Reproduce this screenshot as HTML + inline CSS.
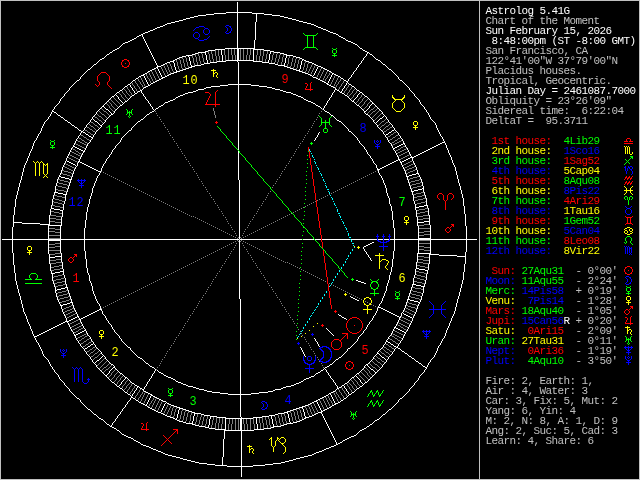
<!DOCTYPE html>
<html><head><meta charset="utf-8"><title>Astrolog 5.41G</title>
<style>
html,body{margin:0;padding:0;background:#000;}
body{width:640px;height:480px;position:relative;overflow:hidden;}
#t{position:absolute;left:0;top:0;width:640px;height:480px;will-change:transform;}
.l{position:absolute;left:485.4px;height:10px;line-height:10px;font-family:"Liberation Mono",monospace;font-size:11px;letter-spacing:-0.6011px;white-space:pre;}
.h{position:absolute;width:30px;height:16px;line-height:16px;text-align:center;font-family:"Liberation Mono",monospace;font-size:13.5px;letter-spacing:1px;text-indent:1px;white-space:pre;transform:scaleX(0.88);}
</style></head><body>
<svg width="640" height="480" viewBox="0 0 640 480" shape-rendering="crispEdges" style="position:absolute;left:0;top:0"><path fill="#0000ff" d="M226 25h3v1h-3zM199 26h5v1h-5zM225 26h1v1h-1zM229 26h2v1h-2zM196 27h3v1h-3zM204 27h1v1h-1zM226 27h1v1h-1zM195 28h1v1h-1zM205 28h3v1h-3zM194 29h1v1h-1zM204 29h1v1h-1zM208 29h1v1h-1zM193 30h1v1h-1zM226 31h1v1h-1zM195 32h3v1h-3zM225 32h1v1h-1zM229 32h2v1h-2zM194 33h1v1h-1zM198 33h1v1h-1zM204 33h1v1h-1zM208 33h1v1h-1zM226 33h3v1h-3zM205 34h3v1h-3zM209 36h1v1h-1zM194 37h1v1h-1zM198 37h1v1h-1zM208 37h1v1h-1zM195 38h3v1h-3zM207 38h1v1h-1zM198 39h1v1h-1zM204 39h3v1h-3zM199 40h5v1h-5zM377 140h1v1h-1zM376 141h1v1h-1zM378 141h1v1h-1zM377 142h1v1h-1zM375 143h1v1h-1zM379 143h1v1h-1zM376 144h1v1h-1zM378 144h1v1h-1zM375 146h5v1h-5zM630 166h2v1h-2zM624 167h1v1h-1zM628 167h2v1h-2zM630 169h2v1h-2zM631 174h1v1h-1zM77 180h9v1h-9zM79 182h1v1h-1zM83 182h1v1h-1zM80 183h1v1h-1zM82 183h1v1h-1zM79 185h2v1h-2zM82 185h2v1h-2zM625 206h1v1h-1zM631 206h1v1h-1zM626 207h1v1h-1zM630 207h1v1h-1zM627 208h3v1h-3zM626 209h1v1h-1zM630 209h1v1h-1zM626 213h1v1h-1zM630 213h1v1h-1zM627 214h3v1h-3zM376 236h1v1h-1zM378 236h1v1h-1zM382 236h1v1h-1zM384 236h1v1h-1zM388 236h1v1h-1zM390 236h1v1h-1zM378 240h1v1h-1zM388 240h1v1h-1zM378 241h3v1h-3zM386 241h3v1h-3zM380 242h3v1h-3zM384 242h3v1h-3zM379 246h4v1h-4zM384 246h4v1h-4zM624 246h1v1h-1zM626 246h1v1h-1zM628 246h1v1h-1zM630 248h1v1h-1zM630 253h1v1h-1zM629 254h1v1h-1zM631 254h1v1h-1zM626 276h3v1h-3zM625 277h1v1h-1zM629 277h2v1h-2zM626 278h1v1h-1zM626 282h1v1h-1zM625 283h1v1h-1zM629 283h2v1h-2zM626 284h3v1h-3zM429 301h1v1h-1zM445 301h1v1h-1zM430 302h1v1h-1zM444 302h1v1h-1zM431 303h1v1h-1zM443 303h1v1h-1zM432 304h1v1h-1zM442 304h1v1h-1zM429 309h17v1h-17zM432 314h1v1h-1zM442 314h1v1h-1zM431 315h1v1h-1zM443 315h1v1h-1zM430 316h1v1h-1zM444 316h1v1h-1zM429 317h1v1h-1zM445 317h1v1h-1zM422 331h9v1h-9zM424 333h1v1h-1zM428 333h1v1h-1zM311 334h3v1h-3zM425 334h1v1h-1zM427 334h1v1h-1zM424 336h2v1h-2zM427 336h2v1h-2zM297 343h3v1h-3zM322 346h5v1h-5zM320 347h3v1h-3zM326 347h3v1h-3zM624 347h9v1h-9zM319 348h1v1h-1zM328 348h2v1h-2zM63 349h1v1h-1zM321 349h1v1h-1zM329 349h1v1h-1zM626 349h1v1h-1zM630 349h1v1h-1zM62 350h1v1h-1zM64 350h1v1h-1zM321 350h2v1h-2zM627 350h1v1h-1zM629 350h1v1h-1zM63 351h1v1h-1zM322 351h1v1h-1zM61 352h1v1h-1zM65 352h1v1h-1zM626 352h2v1h-2zM629 352h2v1h-2zM62 353h1v1h-1zM64 353h1v1h-1zM61 355h5v1h-5zM308 356h3v1h-3zM628 356h1v1h-1zM322 357h1v1h-1zM627 357h1v1h-1zM629 357h1v1h-1zM321 358h2v1h-2zM628 358h1v1h-1zM321 359h1v1h-1zM329 359h1v1h-1zM626 359h1v1h-1zM630 359h1v1h-1zM308 360h3v1h-3zM319 360h1v1h-1zM328 360h2v1h-2zM627 360h1v1h-1zM629 360h1v1h-1zM320 361h3v1h-3zM326 361h3v1h-3zM305 362h1v1h-1zM313 362h1v1h-1zM322 362h5v1h-5zM626 362h5v1h-5zM305 363h3v1h-3zM311 363h3v1h-3zM307 364h2v1h-2zM310 364h2v1h-2zM72 367h1v1h-1zM76 367h1v1h-1zM80 367h1v1h-1zM73 368h1v1h-1zM75 368h1v1h-1zM77 368h1v1h-1zM79 368h1v1h-1zM81 368h1v1h-1zM305 368h9v1h-9zM87 379h1v1h-1zM89 379h1v1h-1zM83 382h1v1h-1zM87 382h1v1h-1zM84 383h3v1h-3zM262 401h3v1h-3zM261 402h1v1h-1zM265 402h2v1h-2zM262 403h1v1h-1zM262 407h1v1h-1zM261 408h1v1h-1zM265 408h2v1h-2zM262 409h3v1h-3zM60 349h1v3h-1zM63 353h1v2h-1zM63 356h1v2h-1zM66 349h1v3h-1zM74 369h1v13h-1zM78 179h1v1h-1zM78 181h1v1h-1zM78 369h1v13h-1zM81 179h1v1h-1zM81 181h1v7h-1zM82 369h1v13h-1zM84 179h1v1h-1zM84 181h1v1h-1zM88 378h1v4h-1zM193 34h1v3h-1zM199 34h1v3h-1zM203 30h1v3h-1zM209 30h1v3h-1zM227 28h1v3h-1zM230 27h1v1h-1zM230 31h1v1h-1zM231 28h1v3h-1zM263 404h1v3h-1zM266 403h1v1h-1zM266 407h1v1h-1zM267 404h1v3h-1zM298 342h1v1h-1zM298 344h1v1h-1zM303 356h1v5h-1zM304 360h1v3h-1zM307 357h1v3h-1zM309 364h1v4h-1zM309 369h1v4h-1zM311 357h1v3h-1zM312 333h1v1h-1zM312 335h1v1h-1zM314 360h1v3h-1zM315 356h1v5h-1zM320 348h1v2h-1zM320 359h1v2h-1zM323 351h1v7h-1zM330 349h1v3h-1zM330 357h1v3h-1zM331 351h1v7h-1zM374 140h1v3h-1zM377 144h1v2h-1zM377 147h1v2h-1zM377 234h1v7h-1zM380 140h1v3h-1zM383 234h1v17h-1zM389 234h1v7h-1zM423 330h1v1h-1zM423 332h1v1h-1zM426 330h1v1h-1zM426 332h1v7h-1zM429 330h1v1h-1zM429 332h1v1h-1zM433 305h1v4h-1zM433 310h1v4h-1zM441 305h1v4h-1zM441 310h1v4h-1zM625 166h1v5h-1zM625 210h1v3h-1zM625 247h1v7h-1zM625 346h1v1h-1zM625 348h1v1h-1zM625 356h1v3h-1zM626 171h1v3h-1zM627 168h1v3h-1zM627 247h1v7h-1zM627 279h1v3h-1zM628 166h1v1h-1zM628 346h1v1h-1zM628 348h1v7h-1zM628 360h1v2h-1zM628 363h1v2h-1zM629 168h1v1h-1zM629 247h1v6h-1zM630 278h1v1h-1zM630 282h1v1h-1zM631 170h1v1h-1zM631 210h1v3h-1zM631 247h1v6h-1zM631 279h1v3h-1zM631 346h1v1h-1zM631 348h1v1h-1zM631 356h1v3h-1zM632 167h1v2h-1zM632 171h1v3h-1z"/><path fill="#00ff00" d="M303 33h1v1h-1zM317 33h1v1h-1zM304 34h1v1h-1zM316 34h1v1h-1zM305 35h2v1h-2zM308 35h5v1h-5zM314 35h2v1h-2zM305 47h2v1h-2zM308 47h5v1h-5zM314 47h2v1h-2zM304 48h1v1h-1zM316 48h1v1h-1zM332 48h1v1h-1zM336 48h1v1h-1zM303 49h1v1h-1zM317 49h1v1h-1zM333 49h3v1h-3zM333 53h1v1h-1zM335 53h1v1h-1zM332 55h5v1h-5zM126 109h1v1h-1zM132 109h1v1h-1zM127 112h5v1h-5zM126 114h1v1h-1zM132 114h1v1h-1zM128 116h1v1h-1zM130 116h1v1h-1zM319 116h1v1h-1zM331 116h1v1h-1zM129 117h1v1h-1zM320 117h1v1h-1zM330 117h1v1h-1zM321 122h9v1h-9zM320 125h1v1h-1zM330 125h1v1h-1zM217 126h1v1h-1zM319 126h1v1h-1zM331 126h1v1h-1zM218 127h1v1h-1zM219 128h1v1h-1zM324 128h1v1h-1zM326 128h1v1h-1zM221 131h1v1h-1zM222 132h1v1h-1zM324 132h3v1h-3zM223 133h1v1h-1zM224 134h1v1h-1zM225 135h1v1h-1zM227 138h1v1h-1zM228 139h1v1h-1zM50 140h1v1h-1zM54 140h1v1h-1zM229 140h1v1h-1zM51 141h3v1h-3zM230 141h1v1h-1zM231 142h1v1h-1zM310 143h3v1h-3zM51 145h1v1h-1zM53 145h1v1h-1zM233 145h1v1h-1zM234 146h1v1h-1zM50 147h5v1h-5zM235 147h1v1h-1zM236 148h1v1h-1zM237 149h1v1h-1zM238 150h1v1h-1zM308 151h1v1h-1zM240 153h1v1h-1zM241 154h1v1h-1zM242 155h1v1h-1zM307 155h1v1h-1zM243 156h1v1h-1zM630 156h3v1h-3zM244 157h1v1h-1zM631 157h1v1h-1zM630 158h1v1h-1zM307 159h1v1h-1zM625 159h1v1h-1zM629 159h1v1h-1zM246 160h1v1h-1zM626 160h1v1h-1zM628 160h1v1h-1zM247 161h1v1h-1zM627 161h1v1h-1zM248 162h1v1h-1zM626 162h1v1h-1zM628 162h1v1h-1zM249 163h1v1h-1zM307 163h1v1h-1zM625 163h1v1h-1zM629 163h1v1h-1zM250 164h1v1h-1zM624 164h1v1h-1zM252 167h1v1h-1zM307 167h1v1h-1zM253 168h1v1h-1zM254 169h1v1h-1zM255 170h1v1h-1zM256 171h1v1h-1zM306 171h1v1h-1zM258 174h1v1h-1zM259 175h1v1h-1zM306 175h1v1h-1zM260 176h1v1h-1zM261 177h1v1h-1zM262 178h1v1h-1zM306 179h1v1h-1zM264 181h1v1h-1zM265 182h1v1h-1zM266 183h1v1h-1zM306 183h1v1h-1zM267 184h1v1h-1zM268 185h1v1h-1zM269 186h1v1h-1zM305 187h1v1h-1zM271 189h1v1h-1zM272 190h1v1h-1zM273 191h1v1h-1zM305 191h1v1h-1zM274 192h1v1h-1zM275 193h1v1h-1zM305 195h1v1h-1zM277 196h1v1h-1zM625 196h2v1h-2zM630 196h2v1h-2zM278 197h1v1h-1zM279 198h1v1h-1zM280 199h1v1h-1zM305 199h1v1h-1zM625 199h1v1h-1zM631 199h1v1h-1zM281 200h1v1h-1zM283 203h1v1h-1zM304 203h1v1h-1zM284 204h1v1h-1zM285 205h1v1h-1zM286 206h1v1h-1zM287 207h1v1h-1zM304 207h1v1h-1zM289 210h1v1h-1zM290 211h1v1h-1zM304 211h1v1h-1zM291 212h1v1h-1zM292 213h1v1h-1zM293 214h1v1h-1zM304 215h1v1h-1zM295 217h1v1h-1zM296 218h1v1h-1zM297 219h1v1h-1zM303 219h1v1h-1zM298 220h1v1h-1zM299 221h1v1h-1zM300 222h1v1h-1zM303 223h1v1h-1zM302 225h1v1h-1zM303 227h2v1h-2zM305 228h1v1h-1zM306 229h1v1h-1zM303 231h1v1h-1zM308 232h1v1h-1zM309 233h1v1h-1zM310 234h1v1h-1zM302 235h1v1h-1zM311 235h1v1h-1zM312 236h1v1h-1zM627 236h3v1h-3zM626 237h1v1h-1zM630 237h1v1h-1zM302 239h1v1h-1zM314 239h1v1h-1zM315 240h1v1h-1zM316 241h1v1h-1zM317 242h1v1h-1zM624 242h1v1h-1zM302 243h1v1h-1zM318 243h1v1h-1zM625 243h1v1h-1zM631 243h1v1h-1zM632 244h1v1h-1zM320 246h1v1h-1zM302 247h1v1h-1zM321 247h1v1h-1zM322 248h1v1h-1zM323 249h1v1h-1zM324 250h1v1h-1zM301 251h1v1h-1zM326 253h1v1h-1zM327 254h1v1h-1zM301 255h1v1h-1zM328 255h1v1h-1zM329 256h1v1h-1zM330 257h1v1h-1zM331 258h1v1h-1zM301 259h1v1h-1zM333 261h1v1h-1zM334 262h1v1h-1zM301 263h1v1h-1zM335 263h1v1h-1zM336 264h1v1h-1zM337 265h1v1h-1zM300 267h1v1h-1zM339 268h1v1h-1zM340 269h1v1h-1zM341 270h1v1h-1zM300 271h1v1h-1zM342 271h1v1h-1zM343 272h1v1h-1zM31 273h5v1h-5zM30 274h1v1h-1zM36 274h1v1h-1zM300 275h1v1h-1zM345 275h1v1h-1zM346 276h1v1h-1zM347 277h1v1h-1zM25 279h7v1h-7zM35 279h7v1h-7zM300 279h1v1h-1zM351 279h3v1h-3zM370 279h1v1h-1zM378 279h1v1h-1zM371 280h1v1h-1zM377 280h1v1h-1zM372 281h5v1h-5zM371 282h2v1h-2zM376 282h2v1h-2zM25 283h17v1h-17zM299 283h1v1h-1zM626 286h1v1h-1zM630 286h1v1h-1zM299 287h1v1h-1zM627 287h3v1h-3zM371 288h2v1h-2zM376 288h2v1h-2zM373 289h1v1h-1zM375 289h1v1h-1zM299 291h1v1h-1zM395 291h1v1h-1zM399 291h1v1h-1zM627 291h1v1h-1zM629 291h1v1h-1zM396 292h3v1h-3zM370 293h9v1h-9zM626 293h5v1h-5zM299 295h1v1h-1zM396 296h1v1h-1zM398 296h1v1h-1zM395 298h5v1h-5zM298 299h1v1h-1zM298 303h1v1h-1zM298 307h1v1h-1zM298 311h1v1h-1zM297 315h1v1h-1zM297 319h1v1h-1zM297 323h1v1h-1zM297 327h1v1h-1zM296 331h1v1h-1zM296 335h1v1h-1zM625 336h1v1h-1zM631 336h1v1h-1zM296 339h1v1h-1zM626 339h5v1h-5zM625 341h1v1h-1zM631 341h1v1h-1zM627 343h1v1h-1zM629 343h1v1h-1zM628 344h1v1h-1zM168 388h1v1h-1zM172 388h1v1h-1zM169 389h3v1h-3zM383 390h1v1h-1zM370 391h2v1h-2zM376 391h2v1h-2zM169 393h1v1h-1zM171 393h1v1h-1zM369 393h1v1h-1zM375 393h1v1h-1zM381 393h1v1h-1zM168 395h5v1h-5zM373 395h2v1h-2zM379 395h2v1h-2zM367 396h1v1h-1zM383 400h1v1h-1zM370 401h2v1h-2zM376 401h2v1h-2zM369 403h1v1h-1zM375 403h1v1h-1zM381 403h1v1h-1zM373 405h2v1h-2zM379 405h2v1h-2zM367 406h1v1h-1zM350 411h1v1h-1zM356 411h1v1h-1zM351 414h5v1h-5zM350 416h1v1h-1zM356 416h1v1h-1zM352 418h1v1h-1zM354 418h1v1h-1zM353 419h1v1h-1zM29 275h1v3h-1zM30 278h1v1h-1zM36 278h1v1h-1zM37 275h1v3h-1zM50 142h1v3h-1zM52 145h1v2h-1zM52 148h1v1h-1zM54 142h1v3h-1zM127 110h1v2h-1zM127 113h1v1h-1zM129 111h1v1h-1zM129 113h1v3h-1zM131 110h1v2h-1zM131 113h1v1h-1zM168 390h1v3h-1zM170 393h1v2h-1zM170 396h1v1h-1zM172 390h1v3h-1zM220 129h1v2h-1zM226 136h1v2h-1zM232 143h1v2h-1zM239 151h1v2h-1zM245 158h1v2h-1zM251 165h1v2h-1zM257 172h1v2h-1zM263 179h1v2h-1zM270 187h1v2h-1zM276 194h1v2h-1zM282 201h1v2h-1zM288 208h1v2h-1zM294 215h1v2h-1zM301 223h1v2h-1zM303 226h1v1h-1zM307 35h1v13h-1zM307 230h1v2h-1zM311 142h1v1h-1zM311 144h1v1h-1zM313 35h1v13h-1zM313 237h1v2h-1zM319 244h1v2h-1zM321 118h1v4h-1zM321 123h1v2h-1zM323 129h1v3h-1zM325 120h1v2h-1zM325 123h1v6h-1zM325 251h1v2h-1zM327 129h1v3h-1zM329 118h1v4h-1zM329 123h1v2h-1zM332 50h1v3h-1zM332 259h1v2h-1zM334 53h1v2h-1zM334 56h1v1h-1zM336 50h1v3h-1zM338 266h1v2h-1zM344 273h1v2h-1zM351 412h1v2h-1zM351 415h1v1h-1zM352 278h1v1h-1zM352 280h1v1h-1zM353 413h1v1h-1zM353 415h1v3h-1zM355 412h1v2h-1zM355 415h1v1h-1zM368 394h1v2h-1zM368 404h1v2h-1zM370 284h1v3h-1zM370 392h1v1h-1zM370 402h1v1h-1zM371 283h1v1h-1zM371 287h1v1h-1zM371 390h1v1h-1zM371 400h1v1h-1zM372 392h1v3h-1zM372 402h1v3h-1zM373 396h1v1h-1zM373 406h1v1h-1zM374 289h1v4h-1zM374 294h1v2h-1zM374 394h1v1h-1zM374 404h1v1h-1zM376 392h1v1h-1zM376 402h1v1h-1zM377 283h1v1h-1zM377 287h1v1h-1zM377 390h1v1h-1zM377 400h1v1h-1zM378 284h1v3h-1zM378 392h1v3h-1zM378 402h1v3h-1zM379 396h1v1h-1zM379 406h1v1h-1zM380 394h1v1h-1zM380 404h1v1h-1zM382 391h1v2h-1zM382 401h1v2h-1zM395 293h1v3h-1zM397 296h1v2h-1zM397 299h1v1h-1zM399 293h1v3h-1zM624 197h1v2h-1zM625 238h1v3h-1zM626 241h1v2h-1zM626 288h1v3h-1zM626 337h1v2h-1zM626 340h1v1h-1zM627 197h1v3h-1zM628 200h1v5h-1zM628 291h1v2h-1zM628 294h1v1h-1zM628 338h1v1h-1zM628 340h1v3h-1zM629 197h1v3h-1zM630 241h1v2h-1zM630 288h1v3h-1zM630 337h1v2h-1zM630 340h1v1h-1zM631 238h1v3h-1zM632 157h1v2h-1zM632 197h1v2h-1z"/><path fill="#00ffff" d="M310 151h1v1h-1zM311 153h1v1h-1zM313 157h1v1h-1zM314 159h1v1h-1zM314 161h1v1h-1zM316 165h1v1h-1zM317 167h1v1h-1zM319 171h1v1h-1zM320 173h1v1h-1zM322 177h1v1h-1zM324 181h1v1h-1zM325 183h1v1h-1zM325 185h1v1h-1zM327 189h2v1h-2zM328 191h1v1h-1zM330 195h1v1h-1zM331 197h1v1h-1zM333 201h1v1h-1zM335 205h1v1h-1zM336 207h1v1h-1zM338 213h2v1h-2zM339 215h1v1h-1zM341 219h1v1h-1zM342 221h1v1h-1zM344 225h1v1h-1zM345 227h1v1h-1zM347 231h1v1h-1zM349 237h2v1h-2zM350 239h1v1h-1zM352 243h2v1h-2zM353 245h1v1h-1zM354 247h1v1h-1zM347 258h1v1h-1zM346 259h1v1h-1zM332 282h1v1h-1zM331 283h1v1h-1zM330 285h1v1h-1zM329 286h1v1h-1zM317 306h1v1h-1zM316 307h1v1h-1zM315 309h1v1h-1zM314 310h1v1h-1zM313 312h1v1h-1zM312 313h1v1h-1zM311 315h1v1h-1zM310 316h1v1h-1zM302 330h1v1h-1zM301 331h1v1h-1zM300 333h1v1h-1zM299 334h1v1h-1zM298 336h1v1h-1zM297 337h1v1h-1zM303 327h1v2h-1zM305 324h1v2h-1zM307 321h1v2h-1zM309 149h1v2h-1zM309 318h1v2h-1zM312 155h1v2h-1zM315 162h1v2h-1zM318 168h1v2h-1zM318 303h1v2h-1zM320 300h1v2h-1zM321 174h1v2h-1zM322 297h1v2h-1zM323 179h1v2h-1zM324 294h1v2h-1zM326 186h1v2h-1zM326 291h1v2h-1zM329 192h1v2h-1zM332 198h1v2h-1zM333 279h1v2h-1zM334 203h1v2h-1zM335 276h1v2h-1zM337 209h1v3h-1zM337 273h1v2h-1zM339 270h1v2h-1zM340 216h1v2h-1zM341 267h1v2h-1zM343 222h1v2h-1zM343 264h1v2h-1zM345 261h1v2h-1zM346 228h1v2h-1zM348 233h1v3h-1zM348 255h1v2h-1zM350 252h1v2h-1zM351 240h1v2h-1zM352 249h1v2h-1z"/><path fill="#808080" d="M201 53h1v1h-1zM277 53h1v1h-1zM280 54h1v1h-1zM185 57h1v1h-1zM293 57h1v1h-1zM296 58h1v1h-1zM204 62h1v1h-1zM274 62h1v1h-1zM169 63h1v1h-1zM166 64h1v1h-1zM312 64h1v1h-1zM163 65h1v1h-1zM315 65h1v1h-1zM321 68h1v1h-1zM154 69h1v1h-1zM324 69h1v1h-1zM151 71h1v1h-1zM327 71h1v1h-1zM148 72h1v1h-1zM330 72h1v1h-1zM168 74h1v1h-1zM310 74h1v1h-1zM165 75h1v1h-1zM328 75h1v1h-1zM335 75h1v1h-1zM140 77h1v1h-1zM316 77h1v1h-1zM338 77h1v1h-1zM148 78h1v1h-1zM159 78h1v1h-1zM319 78h1v1h-1zM326 78h1v1h-1zM156 80h1v1h-1zM322 80h1v1h-1zM139 81h1v1h-1zM153 81h1v1h-1zM324 81h1v1h-1zM339 81h1v1h-1zM136 83h1v1h-1zM342 83h1v1h-1zM141 84h1v1h-1zM330 84h1v1h-1zM337 84h1v1h-1zM133 85h1v1h-1zM138 86h1v1h-1zM145 86h1v1h-1zM333 86h1v1h-1zM340 86h1v1h-1zM143 87h1v1h-1zM335 87h1v1h-1zM347 87h1v1h-1zM135 88h1v1h-1zM124 89h1v1h-1zM128 89h1v1h-1zM140 89h1v1h-1zM338 89h1v1h-1zM350 89h1v1h-1zM354 89h1v1h-1zM125 90h1v1h-1zM345 90h1v1h-1zM353 90h1v1h-1zM137 91h1v1h-1zM130 92h1v1h-1zM348 92h1v1h-1zM119 93h1v1h-1zM123 93h1v1h-1zM127 93h1v1h-1zM351 93h1v1h-1zM355 93h1v1h-1zM120 94h1v1h-1zM124 94h1v1h-1zM128 94h1v1h-1zM350 94h1v1h-1zM354 94h1v1h-1zM362 94h1v1h-1zM129 95h1v1h-1zM349 95h1v1h-1zM130 96h1v1h-1zM348 96h1v1h-1zM113 97h1v1h-1zM122 97h1v1h-1zM126 97h1v1h-1zM352 97h1v1h-1zM360 97h1v1h-1zM364 97h1v1h-1zM114 98h1v1h-1zM123 98h1v1h-1zM127 98h1v1h-1zM351 98h1v1h-1zM359 98h1v1h-1zM363 98h1v1h-1zM110 99h1v1h-1zM115 99h1v1h-1zM124 99h1v1h-1zM367 99h1v1h-1zM111 100h1v1h-1zM116 100h1v1h-1zM125 100h1v1h-1zM366 100h1v1h-1zM108 101h1v1h-1zM112 101h1v1h-1zM117 101h1v1h-1zM357 101h1v1h-1zM361 101h1v1h-1zM365 101h1v1h-1zM370 101h1v1h-1zM109 102h1v1h-1zM113 102h1v1h-1zM118 102h1v1h-1zM356 102h1v1h-1zM360 102h1v1h-1zM369 102h1v1h-1zM106 103h1v1h-1zM110 103h1v1h-1zM114 103h1v1h-1zM119 103h1v1h-1zM359 103h1v1h-1zM368 103h1v1h-1zM107 104h1v1h-1zM115 104h1v1h-1zM120 104h1v1h-1zM358 104h1v1h-1zM363 104h1v1h-1zM108 105h1v1h-1zM116 105h1v1h-1zM362 105h1v1h-1zM112 106h1v1h-1zM117 106h1v1h-1zM361 106h1v1h-1zM366 106h1v1h-1zM375 106h1v1h-1zM113 107h1v1h-1zM365 107h1v1h-1zM374 107h1v1h-1zM101 108h1v1h-1zM110 108h1v1h-1zM114 108h1v1h-1zM364 108h1v1h-1zM373 108h1v1h-1zM377 108h1v1h-1zM102 109h1v1h-1zM111 109h1v1h-1zM115 109h1v1h-1zM322 109h1v1h-1zM363 109h1v1h-1zM371 109h2v1h-2zM376 109h1v1h-1zM103 110h1v1h-1zM112 110h1v1h-1zM370 110h1v1h-1zM375 110h1v1h-1zM379 110h1v1h-1zM99 111h1v1h-1zM104 111h2v1h-2zM113 111h1v1h-1zM155 111h1v1h-1zM321 111h1v1h-1zM369 111h1v1h-1zM373 111h2v1h-2zM378 111h1v1h-1zM100 112h1v1h-1zM106 112h1v1h-1zM368 112h1v1h-1zM372 112h1v1h-1zM377 112h1v1h-1zM101 113h1v1h-1zM107 113h1v1h-1zM156 113h1v1h-1zM319 113h1v1h-1zM367 113h1v1h-1zM371 113h1v1h-1zM376 113h1v1h-1zM381 113h1v1h-1zM97 114h1v1h-1zM102 114h2v1h-2zM108 114h1v1h-1zM370 114h1v1h-1zM375 114h1v1h-1zM380 114h1v1h-1zM98 115h1v1h-1zM104 115h1v1h-1zM109 115h1v1h-1zM157 115h1v1h-1zM318 115h1v1h-1zM369 115h1v1h-1zM374 115h1v1h-1zM379 115h1v1h-1zM94 116h1v1h-1zM99 116h2v1h-2zM105 116h1v1h-1zM373 116h1v1h-1zM378 116h1v1h-1zM95 117h2v1h-2zM101 117h1v1h-1zM106 117h1v1h-1zM159 117h1v1h-1zM317 117h1v1h-1zM372 117h1v1h-1zM377 117h1v1h-1zM97 118h1v1h-1zM102 118h1v1h-1zM376 118h1v1h-1zM98 119h1v1h-1zM103 119h1v1h-1zM160 119h1v1h-1zM316 119h1v1h-1zM375 119h1v1h-1zM385 119h1v1h-1zM99 120h2v1h-2zM104 120h1v1h-1zM374 120h1v1h-1zM384 120h1v1h-1zM101 121h1v1h-1zM161 121h1v1h-1zM314 121h1v1h-1zM382 121h2v1h-2zM91 122h2v1h-2zM102 122h1v1h-1zM381 122h1v1h-1zM386 122h2v1h-2zM93 123h1v1h-1zM163 123h1v1h-1zM313 123h1v1h-1zM380 123h1v1h-1zM385 123h1v1h-1zM89 124h1v1h-1zM94 124h1v1h-1zM379 124h1v1h-1zM384 124h1v1h-1zM389 124h1v1h-1zM90 125h1v1h-1zM95 125h2v1h-2zM164 125h1v1h-1zM312 125h1v1h-1zM378 125h1v1h-1zM382 125h2v1h-2zM388 125h1v1h-1zM91 126h2v1h-2zM97 126h1v1h-1zM381 126h1v1h-1zM386 126h2v1h-2zM87 127h2v1h-2zM93 127h1v1h-1zM98 127h1v1h-1zM165 127h1v1h-1zM311 127h1v1h-1zM380 127h1v1h-1zM385 127h1v1h-1zM390 127h2v1h-2zM89 128h1v1h-1zM94 128h1v1h-1zM384 128h1v1h-1zM389 128h1v1h-1zM90 129h2v1h-2zM95 129h1v1h-1zM167 129h1v1h-1zM309 129h1v1h-1zM383 129h1v1h-1zM387 129h2v1h-2zM85 130h2v1h-2zM92 130h1v1h-1zM96 130h1v1h-1zM382 130h1v1h-1zM386 130h1v1h-1zM87 131h1v1h-1zM93 131h2v1h-2zM168 131h1v1h-1zM308 131h1v1h-1zM384 131h2v1h-2zM88 132h2v1h-2zM394 132h2v1h-2zM90 133h1v1h-1zM169 133h1v1h-1zM307 133h1v1h-1zM393 133h1v1h-1zM91 134h2v1h-2zM391 134h2v1h-2zM81 135h2v1h-2zM170 135h1v1h-1zM305 135h1v1h-1zM390 135h1v1h-1zM396 135h2v1h-2zM83 136h1v1h-1zM388 136h2v1h-2zM395 136h1v1h-1zM84 137h2v1h-2zM172 137h1v1h-1zM304 137h1v1h-1zM387 137h1v1h-1zM393 137h2v1h-2zM79 138h2v1h-2zM86 138h1v1h-1zM392 138h1v1h-1zM398 138h2v1h-2zM81 139h1v1h-1zM87 139h2v1h-2zM173 139h1v1h-1zM303 139h1v1h-1zM390 139h2v1h-2zM397 139h1v1h-1zM77 140h1v1h-1zM82 140h2v1h-2zM89 140h1v1h-1zM389 140h1v1h-1zM395 140h2v1h-2zM401 140h1v1h-1zM78 141h2v1h-2zM84 141h1v1h-1zM174 141h1v1h-1zM302 141h1v1h-1zM394 141h1v1h-1zM399 141h2v1h-2zM80 142h2v1h-2zM85 142h2v1h-2zM392 142h2v1h-2zM397 142h2v1h-2zM75 143h1v1h-1zM82 143h2v1h-2zM87 143h1v1h-1zM176 143h1v1h-1zM300 143h1v1h-1zM391 143h1v1h-1zM395 143h2v1h-2zM76 144h2v1h-2zM84 144h2v1h-2zM393 144h2v1h-2zM78 145h2v1h-2zM86 145h1v1h-1zM177 145h1v1h-1zM299 145h1v1h-1zM392 145h1v1h-1zM80 146h2v1h-2zM403 146h2v1h-2zM82 147h2v1h-2zM178 147h1v1h-1zM298 147h1v1h-1zM401 147h2v1h-2zM72 148h1v1h-1zM84 148h1v1h-1zM400 148h1v1h-1zM406 148h1v1h-1zM73 149h2v1h-2zM180 149h1v1h-1zM296 149h1v1h-1zM398 149h2v1h-2zM404 149h2v1h-2zM75 150h1v1h-1zM396 150h2v1h-2zM402 150h2v1h-2zM71 151h1v1h-1zM76 151h2v1h-2zM181 151h1v1h-1zM295 151h1v1h-1zM400 151h2v1h-2zM407 151h1v1h-1zM72 152h2v1h-2zM78 152h1v1h-1zM398 152h2v1h-2zM405 152h2v1h-2zM74 153h2v1h-2zM79 153h2v1h-2zM182 153h1v1h-1zM294 153h1v1h-1zM397 153h1v1h-1zM403 153h2v1h-2zM69 154h1v1h-1zM76 154h2v1h-2zM81 154h1v1h-1zM401 154h2v1h-2zM409 154h1v1h-1zM70 155h2v1h-2zM78 155h2v1h-2zM184 155h1v1h-1zM293 155h1v1h-1zM399 155h2v1h-2zM407 155h2v1h-2zM72 156h2v1h-2zM80 156h1v1h-1zM398 156h1v1h-1zM405 156h2v1h-2zM68 157h1v1h-1zM74 157h2v1h-2zM185 157h1v1h-1zM291 157h1v1h-1zM403 157h2v1h-2zM69 158h2v1h-2zM76 158h2v1h-2zM401 158h2v1h-2zM71 159h2v1h-2zM78 159h1v1h-1zM186 159h1v1h-1zM290 159h1v1h-1zM400 159h1v1h-1zM73 160h2v1h-2zM75 161h2v1h-2zM188 161h1v1h-1zM289 161h1v1h-1zM410 161h2v1h-2zM77 162h1v1h-1zM408 162h2v1h-2zM65 163h1v1h-1zM189 163h1v1h-1zM288 163h1v1h-1zM406 163h2v1h-2zM413 163h1v1h-1zM66 164h2v1h-2zM404 164h2v1h-2zM411 164h2v1h-2zM68 165h2v1h-2zM190 165h1v1h-1zM286 165h1v1h-1zM403 165h1v1h-1zM409 165h2v1h-2zM64 166h1v1h-1zM70 166h2v1h-2zM407 166h2v1h-2zM414 166h1v1h-1zM65 167h2v1h-2zM72 167h2v1h-2zM192 167h1v1h-1zM285 167h1v1h-1zM405 167h2v1h-2zM412 167h2v1h-2zM67 168h2v1h-2zM74 168h1v1h-1zM404 168h1v1h-1zM409 168h3v1h-3zM69 169h2v1h-2zM193 169h1v1h-1zM284 169h1v1h-1zM407 169h2v1h-2zM415 169h1v1h-1zM62 170h2v1h-2zM71 170h2v1h-2zM377 170h1v1h-1zM405 170h2v1h-2zM413 170h2v1h-2zM64 171h4v1h-4zM101 171h1v1h-1zM194 171h1v1h-1zM282 171h1v1h-1zM375 171h1v1h-1zM410 171h3v1h-3zM68 172h3v1h-3zM103 172h1v1h-1zM373 172h1v1h-1zM408 172h2v1h-2zM61 173h2v1h-2zM71 173h2v1h-2zM105 173h1v1h-1zM196 173h1v1h-1zM281 173h1v1h-1zM371 173h1v1h-1zM406 173h2v1h-2zM63 174h4v1h-4zM107 174h1v1h-1zM369 174h1v1h-1zM67 175h3v1h-3zM109 175h1v1h-1zM197 175h1v1h-1zM280 175h1v1h-1zM367 175h1v1h-1zM70 176h2v1h-2zM111 176h1v1h-1zM365 176h1v1h-1zM417 176h2v1h-2zM113 177h1v1h-1zM198 177h1v1h-1zM279 177h1v1h-1zM363 177h1v1h-1zM413 177h4v1h-4zM115 178h1v1h-1zM361 178h1v1h-1zM410 178h3v1h-3zM58 179h2v1h-2zM117 179h1v1h-1zM199 179h1v1h-1zM277 179h1v1h-1zM359 179h1v1h-1zM408 179h2v1h-2zM419 179h2v1h-2zM60 180h4v1h-4zM119 180h1v1h-1zM357 180h1v1h-1zM415 180h4v1h-4zM64 181h4v1h-4zM121 181h1v1h-1zM201 181h1v1h-1zM276 181h1v1h-1zM355 181h1v1h-1zM411 181h4v1h-4zM58 182h1v1h-1zM68 182h2v1h-2zM123 182h1v1h-1zM353 182h1v1h-1zM409 182h2v1h-2zM420 182h2v1h-2zM59 183h4v1h-4zM125 183h1v1h-1zM202 183h1v1h-1zM275 183h1v1h-1zM351 183h1v1h-1zM416 183h4v1h-4zM63 184h4v1h-4zM127 184h1v1h-1zM349 184h1v1h-1zM412 184h4v1h-4zM57 185h1v1h-1zM67 185h2v1h-2zM129 185h1v1h-1zM203 185h1v1h-1zM273 185h1v1h-1zM347 185h1v1h-1zM410 185h2v1h-2zM421 185h1v1h-1zM58 186h4v1h-4zM131 186h1v1h-1zM345 186h1v1h-1zM417 186h4v1h-4zM62 187h4v1h-4zM133 187h1v1h-1zM205 187h1v1h-1zM272 187h1v1h-1zM343 187h1v1h-1zM413 187h4v1h-4zM66 188h2v1h-2zM135 188h1v1h-1zM341 188h1v1h-1zM411 188h2v1h-2zM56 189h2v1h-2zM137 189h1v1h-1zM206 189h1v1h-1zM339 189h1v1h-1zM58 190h6v1h-6zM139 190h1v1h-1zM337 190h1v1h-1zM64 191h3v1h-3zM141 191h1v1h-1zM207 191h1v1h-1zM270 191h1v1h-1zM335 191h1v1h-1zM143 192h1v1h-1zM333 192h1v1h-1zM421 192h3v1h-3zM145 193h1v1h-1zM209 193h1v1h-1zM268 193h1v1h-1zM331 193h1v1h-1zM416 193h5v1h-5zM147 194h1v1h-1zM329 194h1v1h-1zM413 194h3v1h-3zM54 195h3v1h-3zM149 195h1v1h-1zM210 195h1v1h-1zM267 195h1v1h-1zM327 195h1v1h-1zM422 195h3v1h-3zM57 196h5v1h-5zM151 196h1v1h-1zM325 196h1v1h-1zM417 196h5v1h-5zM62 197h3v1h-3zM153 197h1v1h-1zM211 197h1v1h-1zM266 197h1v1h-1zM323 197h1v1h-1zM414 197h3v1h-3zM54 198h1v1h-1zM155 198h1v1h-1zM321 198h1v1h-1zM423 198h3v1h-3zM55 199h4v1h-4zM157 199h1v1h-1zM213 199h1v1h-1zM265 199h1v1h-1zM319 199h1v1h-1zM418 199h5v1h-5zM59 200h3v1h-3zM159 200h1v1h-1zM317 200h1v1h-1zM415 200h3v1h-3zM53 201h1v1h-1zM62 201h2v1h-2zM161 201h1v1h-1zM214 201h1v1h-1zM263 201h1v1h-1zM315 201h1v1h-1zM425 201h1v1h-1zM54 202h4v1h-4zM163 202h1v1h-1zM313 202h1v1h-1zM421 202h4v1h-4zM58 203h4v1h-4zM165 203h1v1h-1zM215 203h1v1h-1zM262 203h1v1h-1zM311 203h1v1h-1zM417 203h4v1h-4zM62 204h1v1h-1zM167 204h1v1h-1zM309 204h1v1h-1zM416 204h1v1h-1zM52 205h3v1h-3zM169 205h1v1h-1zM217 205h1v1h-1zM261 205h1v1h-1zM307 205h1v1h-1zM55 206h5v1h-5zM171 206h1v1h-1zM305 206h1v1h-1zM60 207h3v1h-3zM173 207h1v1h-1zM218 207h1v1h-1zM259 207h1v1h-1zM303 207h1v1h-1zM175 208h1v1h-1zM301 208h1v1h-1zM425 208h3v1h-3zM177 209h1v1h-1zM219 209h1v1h-1zM258 209h1v1h-1zM299 209h1v1h-1zM419 209h6v1h-6zM179 210h1v1h-1zM297 210h1v1h-1zM417 210h2v1h-2zM51 211h3v1h-3zM181 211h1v1h-1zM221 211h1v1h-1zM257 211h1v1h-1zM295 211h1v1h-1zM425 211h3v1h-3zM54 212h5v1h-5zM183 212h1v1h-1zM293 212h1v1h-1zM420 212h5v1h-5zM59 213h3v1h-3zM185 213h1v1h-1zM222 213h1v1h-1zM256 213h1v1h-1zM291 213h1v1h-1zM417 213h3v1h-3zM187 214h1v1h-1zM289 214h1v1h-1zM50 215h6v1h-6zM189 215h1v1h-1zM223 215h1v1h-1zM254 215h1v1h-1zM287 215h1v1h-1zM423 215h6v1h-6zM56 216h6v1h-6zM191 216h1v1h-1zM193 216h1v1h-1zM285 216h1v1h-1zM417 216h6v1h-6zM195 217h1v1h-1zM225 217h1v1h-1zM253 217h1v1h-1zM283 217h1v1h-1zM50 218h6v1h-6zM197 218h1v1h-1zM281 218h1v1h-1zM423 218h6v1h-6zM56 219h5v1h-5zM199 219h1v1h-1zM226 219h1v1h-1zM252 219h1v1h-1zM279 219h1v1h-1zM418 219h5v1h-5zM201 220h1v1h-1zM277 220h1v1h-1zM50 221h5v1h-5zM203 221h1v1h-1zM227 221h1v1h-1zM250 221h1v1h-1zM275 221h1v1h-1zM55 222h6v1h-6zM205 222h1v1h-1zM273 222h1v1h-1zM207 223h1v1h-1zM228 223h1v1h-1zM249 223h1v1h-1zM271 223h1v1h-1zM209 224h1v1h-1zM269 224h1v1h-1zM424 224h5v1h-5zM211 225h1v1h-1zM230 225h1v1h-1zM248 225h1v1h-1zM267 225h1v1h-1zM418 225h6v1h-6zM213 226h1v1h-1zM265 226h1v1h-1zM215 227h1v1h-1zM231 227h1v1h-1zM247 227h1v1h-1zM263 227h1v1h-1zM49 228h6v1h-6zM217 228h1v1h-1zM261 228h1v1h-1zM419 228h11v1h-11zM55 229h5v1h-5zM219 229h1v1h-1zM232 229h1v1h-1zM245 229h1v1h-1zM259 229h1v1h-1zM221 230h1v1h-1zM257 230h1v1h-1zM49 231h6v1h-6zM223 231h1v1h-1zM234 231h1v1h-1zM244 231h1v1h-1zM255 231h1v1h-1zM424 231h6v1h-6zM55 232h5v1h-5zM225 232h1v1h-1zM253 232h1v1h-1zM419 232h5v1h-5zM227 233h1v1h-1zM235 233h1v1h-1zM243 233h1v1h-1zM251 233h1v1h-1zM229 234h1v1h-1zM249 234h1v1h-1zM424 234h6v1h-6zM49 235h11v1h-11zM231 235h1v1h-1zM236 235h1v1h-1zM242 235h1v1h-1zM247 235h1v1h-1zM419 235h5v1h-5zM233 236h1v1h-1zM245 236h1v1h-1zM235 237h1v1h-1zM238 237h1v1h-1zM240 237h1v1h-1zM243 237h1v1h-1zM49 238h11v1h-11zM237 238h1v1h-1zM241 238h1v1h-1zM239 239h1v1h-1zM237 240h1v1h-1zM241 240h1v1h-1zM419 240h11v1h-11zM235 241h1v1h-1zM238 241h1v1h-1zM240 241h1v1h-1zM243 241h1v1h-1zM233 242h1v1h-1zM245 242h1v1h-1zM55 243h5v1h-5zM231 243h1v1h-1zM236 243h1v1h-1zM242 243h1v1h-1zM247 243h1v1h-1zM419 243h11v1h-11zM49 244h6v1h-6zM229 244h1v1h-1zM249 244h1v1h-1zM227 245h1v1h-1zM235 245h1v1h-1zM243 245h1v1h-1zM251 245h1v1h-1zM55 246h5v1h-5zM225 246h1v1h-1zM253 246h1v1h-1zM419 246h5v1h-5zM49 247h6v1h-6zM223 247h1v1h-1zM234 247h1v1h-1zM244 247h1v1h-1zM255 247h1v1h-1zM424 247h6v1h-6zM221 248h1v1h-1zM257 248h1v1h-1zM219 249h1v1h-1zM233 249h1v1h-1zM246 249h1v1h-1zM259 249h1v1h-1zM419 249h5v1h-5zM49 250h11v1h-11zM217 250h1v1h-1zM261 250h1v1h-1zM424 250h6v1h-6zM215 251h1v1h-1zM231 251h1v1h-1zM247 251h1v1h-1zM263 251h1v1h-1zM213 252h1v1h-1zM265 252h1v1h-1zM55 253h6v1h-6zM211 253h1v1h-1zM230 253h1v1h-1zM248 253h1v1h-1zM267 253h1v1h-1zM50 254h5v1h-5zM209 254h1v1h-1zM269 254h1v1h-1zM207 255h1v1h-1zM229 255h1v1h-1zM250 255h1v1h-1zM271 255h1v1h-1zM205 256h1v1h-1zM273 256h1v1h-1zM418 256h6v1h-6zM203 257h1v1h-1zM228 257h1v1h-1zM251 257h1v1h-1zM275 257h1v1h-1zM424 257h5v1h-5zM201 258h1v1h-1zM277 258h1v1h-1zM56 259h5v1h-5zM199 259h1v1h-1zM226 259h1v1h-1zM252 259h1v1h-1zM279 259h1v1h-1zM418 259h5v1h-5zM50 260h6v1h-6zM197 260h1v1h-1zM281 260h1v1h-1zM423 260h6v1h-6zM195 261h1v1h-1zM225 261h1v1h-1zM253 261h1v1h-1zM283 261h1v1h-1zM56 262h6v1h-6zM193 262h1v1h-1zM285 262h1v1h-1zM287 262h1v1h-1zM417 262h6v1h-6zM50 263h6v1h-6zM191 263h1v1h-1zM224 263h1v1h-1zM255 263h1v1h-1zM289 263h1v1h-1zM423 263h6v1h-6zM189 264h1v1h-1zM291 264h1v1h-1zM59 265h3v1h-3zM187 265h1v1h-1zM222 265h1v1h-1zM256 265h1v1h-1zM293 265h1v1h-1zM417 265h3v1h-3zM54 266h5v1h-5zM185 266h1v1h-1zM295 266h1v1h-1zM420 266h5v1h-5zM51 267h3v1h-3zM183 267h1v1h-1zM221 267h1v1h-1zM257 267h1v1h-1zM297 267h1v1h-1zM425 267h3v1h-3zM60 268h2v1h-2zM181 268h1v1h-1zM299 268h1v1h-1zM54 269h6v1h-6zM179 269h1v1h-1zM220 269h1v1h-1zM259 269h1v1h-1zM301 269h1v1h-1zM51 270h3v1h-3zM177 270h1v1h-1zM303 270h1v1h-1zM175 271h1v1h-1zM219 271h1v1h-1zM260 271h1v1h-1zM305 271h1v1h-1zM416 271h3v1h-3zM173 272h1v1h-1zM307 272h1v1h-1zM419 272h5v1h-5zM171 273h1v1h-1zM217 273h1v1h-1zM261 273h1v1h-1zM309 273h1v1h-1zM424 273h3v1h-3zM62 274h1v1h-1zM169 274h1v1h-1zM311 274h1v1h-1zM416 274h1v1h-1zM58 275h4v1h-4zM167 275h1v1h-1zM216 275h1v1h-1zM263 275h1v1h-1zM313 275h1v1h-1zM417 275h4v1h-4zM54 276h4v1h-4zM165 276h1v1h-1zM315 276h1v1h-1zM421 276h4v1h-4zM53 277h1v1h-1zM163 277h1v1h-1zM215 277h1v1h-1zM264 277h1v1h-1zM317 277h1v1h-1zM415 277h2v1h-2zM425 277h1v1h-1zM61 278h3v1h-3zM161 278h1v1h-1zM319 278h1v1h-1zM417 278h3v1h-3zM56 279h5v1h-5zM159 279h1v1h-1zM213 279h1v1h-1zM265 279h1v1h-1zM321 279h1v1h-1zM420 279h4v1h-4zM53 280h3v1h-3zM157 280h1v1h-1zM323 280h1v1h-1zM424 280h1v1h-1zM62 281h3v1h-3zM155 281h1v1h-1zM212 281h1v1h-1zM267 281h1v1h-1zM325 281h1v1h-1zM414 281h3v1h-3zM57 282h5v1h-5zM153 282h1v1h-1zM417 282h5v1h-5zM54 283h3v1h-3zM151 283h1v1h-1zM211 283h1v1h-1zM268 283h1v1h-1zM329 283h1v1h-1zM422 283h3v1h-3zM63 284h3v1h-3zM149 284h1v1h-1zM331 284h1v1h-1zM58 285h5v1h-5zM147 285h1v1h-1zM210 285h1v1h-1zM269 285h1v1h-1zM333 285h1v1h-1zM55 286h3v1h-3zM145 286h1v1h-1zM335 286h1v1h-1zM143 287h1v1h-1zM208 287h1v1h-1zM271 287h1v1h-1zM337 287h1v1h-1zM412 287h3v1h-3zM141 288h1v1h-1zM339 288h1v1h-1zM415 288h6v1h-6zM139 289h1v1h-1zM207 289h1v1h-1zM272 289h1v1h-1zM341 289h1v1h-1zM421 289h2v1h-2zM66 290h2v1h-2zM137 290h1v1h-1zM343 290h1v1h-1zM411 290h2v1h-2zM62 291h4v1h-4zM135 291h1v1h-1zM206 291h1v1h-1zM273 291h1v1h-1zM345 291h1v1h-1zM413 291h4v1h-4zM58 292h4v1h-4zM133 292h1v1h-1zM347 292h1v1h-1zM417 292h4v1h-4zM57 293h1v1h-1zM67 293h2v1h-2zM131 293h1v1h-1zM205 293h1v1h-1zM275 293h1v1h-1zM349 293h1v1h-1zM410 293h2v1h-2zM421 293h1v1h-1zM63 294h4v1h-4zM129 294h1v1h-1zM351 294h1v1h-1zM412 294h4v1h-4zM59 295h4v1h-4zM127 295h1v1h-1zM203 295h1v1h-1zM276 295h1v1h-1zM353 295h1v1h-1zM416 295h4v1h-4zM57 296h2v1h-2zM68 296h2v1h-2zM125 296h1v1h-1zM355 296h1v1h-1zM409 296h2v1h-2zM420 296h1v1h-1zM64 297h4v1h-4zM123 297h1v1h-1zM202 297h1v1h-1zM277 297h1v1h-1zM357 297h1v1h-1zM411 297h4v1h-4zM60 298h4v1h-4zM121 298h1v1h-1zM359 298h1v1h-1zM415 298h4v1h-4zM58 299h2v1h-2zM69 299h2v1h-2zM119 299h1v1h-1zM201 299h1v1h-1zM279 299h1v1h-1zM361 299h1v1h-1zM419 299h2v1h-2zM66 300h3v1h-3zM117 300h1v1h-1zM62 301h4v1h-4zM115 301h1v1h-1zM199 301h1v1h-1zM280 301h1v1h-1zM365 301h1v1h-1zM60 302h2v1h-2zM113 302h1v1h-1zM367 302h1v1h-1zM407 302h2v1h-2zM111 303h1v1h-1zM198 303h1v1h-1zM281 303h1v1h-1zM369 303h1v1h-1zM409 303h3v1h-3zM109 304h1v1h-1zM371 304h1v1h-1zM412 304h4v1h-4zM71 305h2v1h-2zM107 305h1v1h-1zM197 305h1v1h-1zM282 305h1v1h-1zM373 305h1v1h-1zM406 305h2v1h-2zM416 305h2v1h-2zM69 306h2v1h-2zM105 306h1v1h-1zM375 306h1v1h-1zM408 306h3v1h-3zM66 307h3v1h-3zM103 307h1v1h-1zM196 307h1v1h-1zM284 307h1v1h-1zM377 307h1v1h-1zM411 307h4v1h-4zM64 308h2v1h-2zM72 308h2v1h-2zM101 308h1v1h-1zM406 308h2v1h-2zM415 308h2v1h-2zM63 309h1v1h-1zM70 309h2v1h-2zM194 309h1v1h-1zM285 309h1v1h-1zM408 309h2v1h-2zM67 310h3v1h-3zM74 310h1v1h-1zM404 310h1v1h-1zM410 310h2v1h-2zM65 311h2v1h-2zM72 311h2v1h-2zM193 311h1v1h-1zM286 311h1v1h-1zM405 311h2v1h-2zM412 311h2v1h-2zM64 312h1v1h-1zM70 312h2v1h-2zM407 312h2v1h-2zM414 312h1v1h-1zM68 313h2v1h-2zM75 313h1v1h-1zM192 313h1v1h-1zM288 313h1v1h-1zM409 313h2v1h-2zM66 314h2v1h-2zM73 314h2v1h-2zM411 314h2v1h-2zM65 315h1v1h-1zM71 315h2v1h-2zM190 315h1v1h-1zM289 315h1v1h-1zM413 315h1v1h-1zM69 316h2v1h-2zM401 316h1v1h-1zM67 317h2v1h-2zM189 317h1v1h-1zM290 317h1v1h-1zM402 317h2v1h-2zM404 318h2v1h-2zM78 319h1v1h-1zM188 319h1v1h-1zM292 319h1v1h-1zM400 319h1v1h-1zM406 319h2v1h-2zM76 320h2v1h-2zM401 320h2v1h-2zM408 320h2v1h-2zM74 321h2v1h-2zM187 321h1v1h-1zM293 321h1v1h-1zM403 321h2v1h-2zM410 321h1v1h-1zM72 322h2v1h-2zM80 322h1v1h-1zM398 322h1v1h-1zM405 322h2v1h-2zM70 323h2v1h-2zM78 323h2v1h-2zM185 323h1v1h-1zM294 323h1v1h-1zM399 323h2v1h-2zM407 323h2v1h-2zM69 324h1v1h-1zM76 324h2v1h-2zM397 324h1v1h-1zM401 324h2v1h-2zM409 324h1v1h-1zM74 325h2v1h-2zM81 325h1v1h-1zM184 325h1v1h-1zM296 325h1v1h-1zM398 325h2v1h-2zM403 325h2v1h-2zM72 326h2v1h-2zM79 326h2v1h-2zM400 326h1v1h-1zM405 326h2v1h-2zM71 327h1v1h-1zM77 327h2v1h-2zM183 327h1v1h-1zM401 327h2v1h-2zM407 327h1v1h-1zM75 328h2v1h-2zM81 328h2v1h-2zM403 328h1v1h-1zM73 329h2v1h-2zM79 329h2v1h-2zM182 329h1v1h-1zM298 329h1v1h-1zM404 329h2v1h-2zM72 330h1v1h-1zM78 330h1v1h-1zM394 330h1v1h-1zM406 330h1v1h-1zM76 331h2v1h-2zM180 331h1v1h-1zM300 331h1v1h-1zM395 331h2v1h-2zM74 332h2v1h-2zM397 332h2v1h-2zM86 333h1v1h-1zM179 333h1v1h-1zM301 333h1v1h-1zM392 333h1v1h-1zM399 333h2v1h-2zM84 334h2v1h-2zM393 334h2v1h-2zM401 334h2v1h-2zM82 335h2v1h-2zM87 335h1v1h-1zM178 335h1v1h-1zM302 335h1v1h-1zM391 335h1v1h-1zM395 335h2v1h-2zM403 335h1v1h-1zM80 336h2v1h-2zM85 336h2v1h-2zM392 336h2v1h-2zM397 336h2v1h-2zM78 337h2v1h-2zM84 337h1v1h-1zM176 337h1v1h-1zM304 337h1v1h-1zM394 337h1v1h-1zM399 337h2v1h-2zM77 338h1v1h-1zM82 338h2v1h-2zM89 338h1v1h-1zM389 338h1v1h-1zM395 338h2v1h-2zM401 338h1v1h-1zM81 339h1v1h-1zM87 339h2v1h-2zM175 339h1v1h-1zM305 339h1v1h-1zM390 339h2v1h-2zM397 339h1v1h-1zM79 340h2v1h-2zM86 340h1v1h-1zM392 340h1v1h-1zM398 340h2v1h-2zM84 341h2v1h-2zM91 341h1v1h-1zM174 341h1v1h-1zM306 341h1v1h-1zM393 341h2v1h-2zM83 342h1v1h-1zM89 342h2v1h-2zM395 342h1v1h-1zM81 343h2v1h-2zM88 343h1v1h-1zM173 343h1v1h-1zM308 343h1v1h-1zM396 343h2v1h-2zM86 344h2v1h-2zM386 344h2v1h-2zM85 345h1v1h-1zM171 345h1v1h-1zM309 345h1v1h-1zM388 345h1v1h-1zM83 346h2v1h-2zM389 346h2v1h-2zM93 347h2v1h-2zM170 347h1v1h-1zM310 347h1v1h-1zM384 347h2v1h-2zM391 347h1v1h-1zM92 348h1v1h-1zM96 348h1v1h-1zM382 348h1v1h-1zM386 348h1v1h-1zM392 348h2v1h-2zM90 349h2v1h-2zM95 349h1v1h-1zM169 349h1v1h-1zM311 349h1v1h-1zM383 349h1v1h-1zM387 349h2v1h-2zM89 350h1v1h-1zM94 350h1v1h-1zM384 350h1v1h-1zM389 350h1v1h-1zM87 351h2v1h-2zM93 351h1v1h-1zM98 351h1v1h-1zM167 351h1v1h-1zM313 351h1v1h-1zM380 351h1v1h-1zM385 351h1v1h-1zM390 351h2v1h-2zM91 352h2v1h-2zM97 352h1v1h-1zM381 352h1v1h-1zM386 352h2v1h-2zM90 353h1v1h-1zM95 353h2v1h-2zM100 353h1v1h-1zM166 353h1v1h-1zM314 353h1v1h-1zM382 353h2v1h-2zM388 353h1v1h-1zM89 354h1v1h-1zM94 354h1v1h-1zM99 354h1v1h-1zM384 354h1v1h-1zM389 354h1v1h-1zM93 355h1v1h-1zM98 355h1v1h-1zM165 355h1v1h-1zM315 355h1v1h-1zM385 355h1v1h-1zM91 356h2v1h-2zM97 356h1v1h-1zM376 356h1v1h-1zM386 356h2v1h-2zM95 357h2v1h-2zM164 357h1v1h-1zM317 357h1v1h-1zM377 357h1v1h-1zM94 358h1v1h-1zM104 358h1v1h-1zM374 358h1v1h-1zM378 358h2v1h-2zM93 359h1v1h-1zM103 359h1v1h-1zM162 359h1v1h-1zM318 359h1v1h-1zM375 359h1v1h-1zM380 359h1v1h-1zM102 360h1v1h-1zM376 360h1v1h-1zM381 360h1v1h-1zM101 361h1v1h-1zM106 361h1v1h-1zM161 361h1v1h-1zM319 361h1v1h-1zM372 361h1v1h-1zM377 361h1v1h-1zM382 361h2v1h-2zM100 362h1v1h-1zM105 362h1v1h-1zM373 362h1v1h-1zM378 362h2v1h-2zM384 362h1v1h-1zM99 363h1v1h-1zM104 363h1v1h-1zM109 363h1v1h-1zM160 363h1v1h-1zM321 363h1v1h-1zM369 363h1v1h-1zM374 363h1v1h-1zM380 363h1v1h-1zM98 364h1v1h-1zM103 364h1v1h-1zM108 364h1v1h-1zM370 364h1v1h-1zM375 364h2v1h-2zM381 364h1v1h-1zM97 365h1v1h-1zM102 365h1v1h-1zM107 365h1v1h-1zM111 365h1v1h-1zM159 365h1v1h-1zM322 365h1v1h-1zM371 365h1v1h-1zM377 365h1v1h-1zM101 366h1v1h-1zM106 366h1v1h-1zM110 366h1v1h-1zM372 366h1v1h-1zM378 366h1v1h-1zM100 367h1v1h-1zM104 367h2v1h-2zM109 367h1v1h-1zM157 367h1v1h-1zM323 367h1v1h-1zM365 367h1v1h-1zM373 367h2v1h-2zM379 367h1v1h-1zM99 368h1v1h-1zM103 368h1v1h-1zM108 368h1v1h-1zM366 368h1v1h-1zM375 368h1v1h-1zM102 369h1v1h-1zM106 369h2v1h-2zM115 369h1v1h-1zM156 369h1v1h-1zM363 369h1v1h-1zM367 369h1v1h-1zM376 369h1v1h-1zM101 370h1v1h-1zM105 370h1v1h-1zM114 370h1v1h-1zM364 370h1v1h-1zM368 370h1v1h-1zM377 370h1v1h-1zM104 371h1v1h-1zM113 371h1v1h-1zM365 371h1v1h-1zM103 372h1v1h-1zM112 372h1v1h-1zM117 372h1v1h-1zM361 372h1v1h-1zM366 372h1v1h-1zM116 373h1v1h-1zM362 373h1v1h-1zM370 373h1v1h-1zM115 374h1v1h-1zM120 374h1v1h-1zM358 374h1v1h-1zM363 374h1v1h-1zM371 374h1v1h-1zM110 375h1v1h-1zM119 375h1v1h-1zM359 375h1v1h-1zM364 375h1v1h-1zM368 375h1v1h-1zM372 375h1v1h-1zM109 376h1v1h-1zM118 376h1v1h-1zM122 376h1v1h-1zM360 376h1v1h-1zM365 376h1v1h-1zM369 376h1v1h-1zM108 377h1v1h-1zM113 377h1v1h-1zM117 377h1v1h-1zM121 377h1v1h-1zM361 377h1v1h-1zM366 377h1v1h-1zM370 377h1v1h-1zM112 378h1v1h-1zM353 378h1v1h-1zM362 378h1v1h-1zM367 378h1v1h-1zM111 379h1v1h-1zM354 379h1v1h-1zM363 379h1v1h-1zM368 379h1v1h-1zM115 380h1v1h-1zM119 380h1v1h-1zM127 380h1v1h-1zM351 380h1v1h-1zM355 380h1v1h-1zM364 380h1v1h-1zM114 381h1v1h-1zM118 381h1v1h-1zM126 381h1v1h-1zM352 381h1v1h-1zM356 381h1v1h-1zM365 381h1v1h-1zM130 382h1v1h-1zM348 382h1v1h-1zM129 383h1v1h-1zM349 383h1v1h-1zM116 384h1v1h-1zM124 384h1v1h-1zM128 384h1v1h-1zM350 384h1v1h-1zM354 384h1v1h-1zM358 384h1v1h-1zM123 385h1v1h-1zM127 385h1v1h-1zM351 385h1v1h-1zM355 385h1v1h-1zM359 385h1v1h-1zM130 386h1v1h-1zM348 386h1v1h-1zM341 387h1v1h-1zM125 388h1v1h-1zM133 388h1v1h-1zM353 388h1v1h-1zM124 389h1v1h-1zM128 389h1v1h-1zM140 389h1v1h-1zM338 389h1v1h-1zM350 389h1v1h-1zM354 389h1v1h-1zM343 390h1v1h-1zM131 391h1v1h-1zM143 391h1v1h-1zM335 391h1v1h-1zM138 392h1v1h-1zM145 392h1v1h-1zM333 392h1v1h-1zM340 392h1v1h-1zM345 393h1v1h-1zM141 394h1v1h-1zM148 394h1v1h-1zM337 394h1v1h-1zM136 395h1v1h-1zM342 395h1v1h-1zM139 397h1v1h-1zM154 397h1v1h-1zM325 397h1v1h-1zM339 397h1v1h-1zM156 398h1v1h-1zM322 398h1v1h-1zM152 400h1v1h-1zM159 400h1v1h-1zM319 400h1v1h-1zM330 400h1v1h-1zM140 401h1v1h-1zM162 401h1v1h-1zM338 401h1v1h-1zM143 403h1v1h-1zM150 403h1v1h-1zM313 403h1v1h-1zM168 404h1v1h-1zM310 404h1v1h-1zM148 406h1v1h-1zM330 406h1v1h-1zM151 407h1v1h-1zM327 407h1v1h-1zM154 409h1v1h-1zM324 409h1v1h-1zM157 410h1v1h-1zM163 413h1v1h-1zM315 413h1v1h-1zM166 414h1v1h-1zM312 414h1v1h-1zM309 415h1v1h-1zM204 416h1v1h-1zM274 416h1v1h-1zM182 420h1v1h-1zM185 421h1v1h-1zM293 421h1v1h-1zM198 424h1v1h-1zM201 425h1v1h-1zM277 425h1v1h-1zM109 106h1v2h-1zM111 104h1v2h-1zM111 373h1v2h-1zM114 375h1v2h-1zM116 378h1v2h-1zM117 382h1v2h-1zM120 378h1v2h-1zM121 95h1v2h-1zM122 91h1v2h-1zM122 386h1v2h-1zM125 95h1v2h-1zM125 382h1v2h-1zM126 91h1v2h-1zM126 386h1v2h-1zM127 87h1v2h-1zM127 390h1v2h-1zM129 90h1v2h-1zM129 387h1v2h-1zM130 392h1v2h-1zM131 93h1v2h-1zM131 384h1v2h-1zM132 83h1v2h-1zM132 389h1v2h-1zM134 86h1v2h-1zM134 386h1v2h-1zM135 81h1v2h-1zM135 396h1v2h-1zM136 89h1v2h-1zM137 84h1v2h-1zM137 393h1v2h-1zM138 79h1v2h-1zM138 398h1v2h-1zM139 87h1v2h-1zM139 390h1v2h-1zM140 82h1v2h-1zM140 395h1v2h-1zM141 78h1v2h-1zM141 399h1v2h-1zM142 80h1v2h-1zM142 85h1v2h-1zM142 392h1v2h-1zM142 397h1v2h-1zM143 82h1v2h-1zM143 395h1v2h-1zM144 84h1v2h-1zM144 393h1v2h-1zM144 401h1v2h-1zM145 399h1v2h-1zM146 74h1v2h-1zM146 397h1v2h-1zM147 76h1v2h-1zM147 395h1v2h-1zM149 73h1v2h-1zM149 79h1v2h-1zM149 404h1v2h-1zM150 75h1v2h-1zM150 81h1v2h-1zM151 77h1v2h-1zM151 401h1v2h-1zM152 72h1v2h-1zM152 79h1v2h-1zM152 405h1v2h-1zM153 74h1v2h-1zM153 398h1v2h-1zM153 403h1v2h-1zM154 76h1v2h-1zM154 401h1v2h-1zM155 70h1v2h-1zM155 78h1v2h-1zM155 399h1v2h-1zM155 407h1v2h-1zM156 72h1v2h-1zM156 405h1v2h-1zM157 74h1v2h-1zM157 403h1v2h-1zM158 76h1v2h-1zM158 401h1v2h-1zM158 408h1v2h-1zM159 406h1v2h-1zM160 404h1v2h-1zM161 67h1v2h-1zM161 402h1v2h-1zM162 69h1v2h-1zM163 71h1v2h-1zM164 66h1v2h-1zM164 73h1v2h-1zM164 411h1v2h-1zM165 68h1v2h-1zM165 409h1v2h-1zM166 70h1v2h-1zM166 407h1v2h-1zM167 65h1v2h-1zM167 72h1v2h-1zM167 405h1v2h-1zM167 412h1v2h-1zM168 67h1v3h-1zM168 410h1v2h-1zM169 70h1v2h-1zM169 408h1v2h-1zM170 64h1v2h-1zM170 72h1v2h-1zM170 406h1v2h-1zM170 415h1v2h-1zM171 66h1v3h-1zM171 411h1v4h-1zM172 69h1v2h-1zM172 408h1v3h-1zM173 71h1v2h-1zM173 406h1v2h-1zM173 416h1v2h-1zM174 412h1v4h-1zM175 409h1v3h-1zM176 60h1v2h-1zM176 407h1v2h-1zM177 62h1v4h-1zM178 66h1v3h-1zM179 58h1v2h-1zM179 69h1v2h-1zM179 419h1v2h-1zM180 60h1v4h-1zM180 415h1v4h-1zM181 64h1v4h-1zM181 411h1v4h-1zM182 57h1v2h-1zM182 68h1v2h-1zM182 409h1v2h-1zM183 59h1v4h-1zM183 416h1v4h-1zM184 63h1v4h-1zM184 412h1v4h-1zM185 67h1v2h-1zM185 410h1v2h-1zM186 58h1v4h-1zM186 417h1v4h-1zM187 62h1v4h-1zM187 413h1v4h-1zM188 66h1v2h-1zM188 411h1v2h-1zM189 421h1v2h-1zM190 415h1v6h-1zM191 412h1v3h-1zM192 55h1v3h-1zM193 58h1v5h-1zM194 63h1v3h-1zM195 54h1v3h-1zM195 422h1v3h-1zM196 57h1v5h-1zM196 417h1v5h-1zM197 62h1v3h-1zM197 414h1v3h-1zM198 53h1v3h-1zM199 56h1v5h-1zM199 420h1v4h-1zM200 61h1v3h-1zM200 417h1v3h-1zM201 415h1v2h-1zM202 54h1v4h-1zM202 421h1v4h-1zM203 58h1v4h-1zM203 417h1v4h-1zM205 424h1v3h-1zM206 419h1v5h-1zM207 416h1v3h-1zM208 51h1v3h-1zM209 54h1v6h-1zM210 60h1v2h-1zM211 51h1v3h-1zM211 425h1v3h-1zM212 54h1v5h-1zM212 420h1v5h-1zM213 59h1v3h-1zM213 108h1v3h-1zM213 417h1v3h-1zM214 111h1v4h-1zM215 50h1v6h-1zM215 115h1v3h-1zM215 423h1v6h-1zM216 56h1v6h-1zM216 417h1v6h-1zM218 50h1v6h-1zM218 423h1v6h-1zM219 56h1v5h-1zM219 418h1v5h-1zM221 424h1v5h-1zM222 418h1v6h-1zM224 50h1v5h-1zM225 55h1v6h-1zM228 49h1v11h-1zM228 424h1v6h-1zM229 419h1v5h-1zM231 49h1v6h-1zM231 424h1v6h-1zM232 55h1v5h-1zM232 419h1v5h-1zM234 49h1v6h-1zM235 55h1v5h-1zM235 419h1v11h-1zM238 419h1v11h-1zM240 49h1v11h-1zM243 49h1v11h-1zM243 419h1v5h-1zM244 424h1v6h-1zM246 55h1v5h-1zM246 419h1v5h-1zM247 49h1v6h-1zM247 424h1v6h-1zM249 55h1v5h-1zM250 49h1v6h-1zM250 419h1v11h-1zM253 418h1v6h-1zM254 424h1v5h-1zM256 55h1v6h-1zM257 50h1v5h-1zM259 56h1v5h-1zM259 418h1v5h-1zM260 50h1v6h-1zM260 423h1v6h-1zM262 56h1v6h-1zM262 417h1v6h-1zM263 50h1v6h-1zM263 423h1v6h-1zM265 59h1v3h-1zM265 417h1v3h-1zM266 54h1v5h-1zM266 420h1v5h-1zM267 51h1v3h-1zM267 425h1v3h-1zM268 417h1v2h-1zM269 419h1v6h-1zM270 425h1v3h-1zM271 60h1v3h-1zM272 55h1v5h-1zM273 52h1v3h-1zM275 58h1v4h-1zM275 417h1v4h-1zM276 54h1v4h-1zM276 421h1v4h-1zM277 62h1v2h-1zM278 59h1v3h-1zM278 415h1v3h-1zM279 55h1v4h-1zM279 418h1v5h-1zM280 423h1v3h-1zM281 62h1v3h-1zM281 414h1v3h-1zM282 57h1v5h-1zM282 417h1v5h-1zM283 54h1v3h-1zM283 422h1v3h-1zM284 413h1v3h-1zM285 416h1v5h-1zM286 421h1v3h-1zM287 64h1v3h-1zM288 58h1v6h-1zM289 56h1v2h-1zM290 66h1v2h-1zM290 411h1v2h-1zM291 62h1v4h-1zM291 413h1v4h-1zM292 58h1v4h-1zM292 417h1v4h-1zM293 67h1v2h-1zM293 410h1v2h-1zM294 63h1v4h-1zM294 412h1v4h-1zM295 59h1v4h-1zM295 416h1v4h-1zM296 68h1v2h-1zM296 409h1v2h-1zM296 420h1v2h-1zM297 64h1v4h-1zM297 411h1v4h-1zM298 60h1v4h-1zM298 415h1v4h-1zM299 58h1v2h-1zM299 408h1v2h-1zM299 419h1v2h-1zM300 410h1v3h-1zM301 413h1v4h-1zM302 70h1v2h-1zM302 417h1v2h-1zM303 67h1v3h-1zM304 63h1v4h-1zM305 61h1v2h-1zM305 71h1v2h-1zM305 406h1v2h-1zM306 68h1v3h-1zM306 408h1v2h-1zM307 64h1v4h-1zM307 410h1v3h-1zM308 62h1v2h-1zM308 71h1v2h-1zM308 405h1v2h-1zM308 413h1v2h-1zM309 69h1v2h-1zM309 407h1v2h-1zM310 67h1v2h-1zM310 409h1v3h-1zM311 65h1v2h-1zM311 72h1v2h-1zM311 405h1v2h-1zM311 412h1v2h-1zM312 70h1v2h-1zM312 407h1v2h-1zM313 68h1v2h-1zM313 409h1v2h-1zM314 66h1v2h-1zM314 404h1v2h-1zM314 411h1v2h-1zM315 406h1v2h-1zM316 408h1v2h-1zM317 75h1v2h-1zM317 410h1v2h-1zM318 73h1v2h-1zM319 71h1v2h-1zM320 69h1v2h-1zM320 76h1v2h-1zM320 401h1v2h-1zM321 74h1v2h-1zM321 403h1v2h-1zM322 72h1v2h-1zM322 405h1v2h-1zM323 70h1v2h-1zM323 78h1v2h-1zM323 399h1v2h-1zM323 407h1v2h-1zM324 76h1v2h-1zM324 401h1v2h-1zM325 74h1v2h-1zM325 79h1v2h-1zM325 403h1v2h-1zM326 72h1v2h-1zM326 398h1v2h-1zM326 405h1v2h-1zM327 76h1v2h-1zM327 400h1v2h-1zM328 396h1v2h-1zM328 402h1v2h-1zM329 73h1v2h-1zM329 398h1v2h-1zM329 404h1v2h-1zM331 82h1v2h-1zM331 401h1v2h-1zM332 80h1v2h-1zM332 403h1v2h-1zM333 78h1v2h-1zM334 76h1v2h-1zM334 84h1v2h-1zM334 393h1v2h-1zM335 82h1v2h-1zM335 395h1v2h-1zM336 80h1v2h-1zM336 85h1v2h-1zM336 392h1v2h-1zM336 397h1v2h-1zM337 78h1v2h-1zM337 399h1v2h-1zM338 82h1v2h-1zM338 395h1v2h-1zM339 87h1v2h-1zM339 390h1v2h-1zM340 79h1v2h-1zM340 398h1v2h-1zM341 84h1v2h-1zM341 393h1v2h-1zM342 388h1v2h-1zM343 81h1v2h-1zM343 396h1v2h-1zM344 91h1v2h-1zM344 391h1v2h-1zM346 88h1v2h-1zM346 394h1v2h-1zM347 93h1v2h-1zM347 384h1v2h-1zM348 85h1v2h-1zM349 90h1v2h-1zM349 387h1v2h-1zM351 87h1v2h-1zM351 390h1v2h-1zM352 91h1v2h-1zM352 386h1v2h-1zM353 95h1v2h-1zM353 382h1v2h-1zM356 91h1v2h-1zM356 386h1v2h-1zM357 382h1v2h-1zM358 99h1v2h-1zM361 95h1v2h-1zM362 99h1v2h-1zM364 102h1v2h-1zM367 104h1v2h-1zM367 373h1v2h-1zM369 371h1v2h-1z"/><path fill="#c0c0c0" d="M0 0h640v1h-640zM0 479h640v1h-640zM0 1h1v478h-1zM479 1h1v478h-1zM639 1h1v478h-1z"/><path fill="#ff0000" d="M124 59h3v1h-3zM122 60h2v1h-2zM127 60h2v1h-2zM125 63h1v1h-1zM122 66h2v1h-2zM127 66h2v1h-2zM124 67h3v1h-3zM101 72h5v1h-5zM100 73h1v1h-1zM106 73h1v1h-1zM99 74h1v1h-1zM107 74h1v1h-1zM98 75h1v1h-1zM108 75h1v1h-1zM98 81h1v1h-1zM108 81h1v1h-1zM311 82h1v1h-1zM305 83h2v1h-2zM95 84h1v1h-1zM96 85h1v1h-1zM98 85h1v1h-1zM108 85h1v1h-1zM97 86h1v1h-1zM109 86h1v1h-1zM110 87h1v1h-1zM111 88h1v1h-1zM305 89h8v1h-8zM217 90h1v1h-1zM216 91h1v1h-1zM205 92h4v1h-4zM209 93h1v1h-1zM205 104h15v1h-15zM215 122h3v1h-3zM627 138h3v1h-3zM624 141h4v1h-4zM629 141h4v1h-4zM624 143h9v1h-9zM632 176h1v1h-1zM625 177h2v1h-2zM628 177h2v1h-2zM627 178h2v1h-2zM630 178h2v1h-2zM624 179h1v1h-1zM632 181h1v1h-1zM625 182h2v1h-2zM628 182h2v1h-2zM627 183h2v1h-2zM630 183h2v1h-2zM624 184h1v1h-1zM439 193h3v1h-3zM449 193h3v1h-3zM438 194h1v1h-1zM442 194h1v1h-1zM448 194h1v1h-1zM452 194h1v1h-1zM438 198h1v1h-1zM452 198h1v1h-1zM439 199h1v1h-1zM451 199h1v1h-1zM444 200h1v1h-1zM446 200h1v1h-1zM625 216h1v1h-1zM632 216h1v1h-1zM626 217h1v1h-1zM628 217h2v1h-2zM631 217h1v1h-1zM626 223h1v1h-1zM628 223h2v1h-2zM631 223h1v1h-1zM451 224h3v1h-3zM625 224h1v1h-1zM632 224h1v1h-1zM452 225h1v1h-1zM451 226h1v1h-1zM447 227h2v1h-2zM450 227h1v1h-1zM446 228h1v1h-1zM449 228h1v1h-1zM446 231h1v1h-1zM449 231h1v1h-1zM447 232h2v1h-2zM74 254h3v1h-3zM75 255h1v1h-1zM74 256h1v1h-1zM70 257h2v1h-2zM73 257h1v1h-1zM69 258h1v1h-1zM72 258h1v1h-1zM69 261h1v1h-1zM72 261h1v1h-1zM70 262h2v1h-2zM627 266h3v1h-3zM625 267h2v1h-2zM630 267h2v1h-2zM628 270h1v1h-1zM625 273h2v1h-2zM630 273h2v1h-2zM627 274h3v1h-3zM630 306h3v1h-3zM631 307h1v1h-1zM630 308h1v1h-1zM626 309h2v1h-2zM629 309h1v1h-1zM625 310h1v1h-1zM628 310h1v1h-1zM334 311h3v1h-3zM625 313h1v1h-1zM628 313h1v1h-1zM626 314h2v1h-2zM631 316h1v1h-1zM352 317h5v1h-5zM625 317h2v1h-2zM350 318h2v1h-2zM357 318h2v1h-2zM349 319h1v1h-1zM359 319h1v1h-1zM348 320h1v1h-1zM360 320h1v1h-1zM625 323h8v1h-8zM321 325h3v1h-3zM354 325h1v1h-1zM348 330h1v1h-1zM360 330h1v1h-1zM349 331h1v1h-1zM359 331h1v1h-1zM350 332h2v1h-2zM357 332h2v1h-2zM342 333h6v1h-6zM352 333h5v1h-5zM346 334h1v1h-1zM345 335h1v1h-1zM344 336h1v1h-1zM343 337h1v1h-1zM342 338h1v1h-1zM334 339h5v1h-5zM341 339h1v1h-1zM333 340h1v1h-1zM339 340h2v1h-2zM332 341h1v1h-1zM332 347h1v1h-1zM340 347h1v1h-1zM333 348h1v1h-1zM339 348h1v1h-1zM334 349h5v1h-5zM348 361h3v1h-3zM346 362h2v1h-2zM351 362h2v1h-2zM349 365h1v1h-1zM346 368h2v1h-2zM351 368h2v1h-2zM348 369h3v1h-3zM147 422h1v1h-1zM141 423h2v1h-2zM141 429h8v1h-8zM173 429h5v1h-5zM176 430h1v1h-1zM175 431h1v1h-1zM174 432h1v1h-1zM173 433h1v1h-1zM172 434h1v1h-1zM163 435h1v1h-1zM171 435h1v1h-1zM164 436h1v1h-1zM170 436h1v1h-1zM165 437h1v1h-1zM169 437h1v1h-1zM166 438h1v1h-1zM168 438h1v1h-1zM167 439h1v1h-1zM166 440h1v1h-1zM168 440h1v1h-1zM165 441h1v1h-1zM169 441h1v1h-1zM164 442h1v1h-1zM170 442h1v1h-1zM163 443h1v1h-1zM171 443h1v1h-1zM162 444h1v1h-1zM161 445h1v1h-1zM68 259h1v2h-1zM73 259h1v2h-1zM76 255h1v2h-1zM97 76h1v5h-1zM99 82h1v3h-1zM107 82h1v3h-1zM109 76h1v5h-1zM121 62h1v3h-1zM122 61h1v1h-1zM122 65h1v1h-1zM128 61h1v1h-1zM128 65h1v1h-1zM129 62h1v3h-1zM141 428h1v1h-1zM142 426h1v2h-1zM143 424h1v2h-1zM146 423h1v6h-1zM146 430h1v1h-1zM177 430h1v4h-1zM206 102h1v2h-1zM207 100h1v2h-1zM208 98h1v2h-1zM209 96h1v2h-1zM210 94h1v2h-1zM215 92h1v12h-1zM215 105h1v2h-1zM216 121h1v1h-1zM216 123h1v1h-1zM305 88h1v1h-1zM306 86h1v2h-1zM307 84h1v2h-1zM308 147h1v4h-1zM309 151h1v7h-1zM310 83h1v6h-1zM310 90h1v1h-1zM310 158h1v7h-1zM311 165h1v7h-1zM312 172h1v7h-1zM313 179h1v7h-1zM314 186h1v7h-1zM315 193h1v7h-1zM316 200h1v7h-1zM317 207h1v7h-1zM318 214h1v7h-1zM319 221h1v7h-1zM320 228h1v7h-1zM321 235h1v7h-1zM322 242h1v6h-1zM322 324h1v1h-1zM322 326h1v1h-1zM323 250h1v6h-1zM324 256h1v7h-1zM325 263h1v7h-1zM326 270h1v7h-1zM327 277h1v7h-1zM328 284h1v7h-1zM329 291h1v7h-1zM330 298h1v7h-1zM331 305h1v4h-1zM331 342h1v5h-1zM335 310h1v1h-1zM335 312h1v1h-1zM340 341h1v1h-1zM341 342h1v5h-1zM345 364h1v3h-1zM346 323h1v5h-1zM346 363h1v1h-1zM346 367h1v1h-1zM347 321h1v2h-1zM347 328h1v2h-1zM347 334h1v5h-1zM352 363h1v1h-1zM352 367h1v1h-1zM353 364h1v3h-1zM361 321h1v2h-1zM361 328h1v2h-1zM362 323h1v5h-1zM437 195h1v3h-1zM443 195h1v5h-1zM445 201h1v9h-1zM445 229h1v2h-1zM447 195h1v5h-1zM450 229h1v2h-1zM453 195h1v3h-1zM453 225h1v2h-1zM624 269h1v3h-1zM624 311h1v2h-1zM625 178h1v1h-1zM625 183h1v1h-1zM625 268h1v1h-1zM625 272h1v1h-1zM625 322h1v1h-1zM626 139h1v2h-1zM626 176h1v1h-1zM626 181h1v1h-1zM626 320h1v2h-1zM627 179h1v1h-1zM627 184h1v1h-1zM627 217h1v7h-1zM627 318h1v2h-1zM629 176h1v1h-1zM629 181h1v1h-1zM629 311h1v2h-1zM630 139h1v2h-1zM630 179h1v1h-1zM630 184h1v1h-1zM630 217h1v7h-1zM630 317h1v6h-1zM630 324h1v1h-1zM631 177h1v1h-1zM631 182h1v1h-1zM631 268h1v1h-1zM631 272h1v1h-1zM632 269h1v3h-1zM632 307h1v2h-1z"/><path fill="#ffff00" d="M211 70h2v1h-2zM214 70h2v1h-2zM215 72h2v1h-2zM214 73h1v1h-1zM217 77h1v1h-1zM393 97h1v1h-1zM403 97h1v1h-1zM393 98h2v1h-2zM402 98h2v1h-2zM394 99h9v1h-9zM394 101h1v1h-1zM402 101h1v1h-1zM393 102h1v1h-1zM403 102h1v1h-1zM393 108h1v1h-1zM403 108h1v1h-1zM394 109h1v1h-1zM402 109h1v1h-1zM395 110h1v1h-1zM401 110h1v1h-1zM396 111h5v1h-5zM414 121h3v1h-3zM414 125h1v1h-1zM416 125h1v1h-1zM413 127h5v1h-5zM624 146h1v1h-1zM626 146h1v1h-1zM628 146h1v1h-1zM630 154h2v1h-2zM33 161h1v1h-1zM37 161h1v1h-1zM41 161h1v1h-1zM34 162h1v1h-1zM36 162h1v1h-1zM38 162h1v1h-1zM40 162h1v1h-1zM42 162h1v1h-1zM44 164h1v1h-1zM46 164h1v1h-1zM45 165h1v1h-1zM44 174h1v1h-1zM46 174h1v1h-1zM45 175h1v1h-1zM44 176h1v1h-1zM46 176h1v1h-1zM43 177h1v1h-1zM47 177h1v1h-1zM624 186h1v1h-1zM632 186h1v1h-1zM625 187h1v1h-1zM631 187h1v1h-1zM624 190h9v1h-9zM625 193h1v1h-1zM631 193h1v1h-1zM624 194h1v1h-1zM632 194h1v1h-1zM405 216h3v1h-3zM405 220h1v1h-1zM407 220h1v1h-1zM404 222h5v1h-5zM627 227h3v1h-3zM625 228h2v1h-2zM630 228h2v1h-2zM624 229h1v1h-1zM625 230h2v1h-2zM630 231h2v1h-2zM632 232h1v1h-1zM625 233h2v1h-2zM630 233h2v1h-2zM627 234h3v1h-3zM28 246h3v1h-3zM354 246h1v1h-1zM357 247h3v1h-3zM28 250h1v1h-1zM30 250h1v1h-1zM27 252h5v1h-5zM375 255h4v1h-4zM380 255h4v1h-4zM382 259h4v1h-4zM381 260h1v1h-1zM386 260h2v1h-2zM380 261h1v1h-1zM386 265h1v1h-1zM386 268h1v1h-1zM387 269h1v1h-1zM344 294h3v1h-3zM627 296h3v1h-3zM366 297h3v1h-3zM364 298h2v1h-2zM369 298h2v1h-2zM627 300h1v1h-1zM629 300h1v1h-1zM626 302h5v1h-5zM364 304h2v1h-2zM369 304h2v1h-2zM366 305h1v1h-1zM368 305h1v1h-1zM363 309h9v1h-9zM317 323h1v1h-1zM313 326h1v1h-1zM625 327h2v1h-2zM628 327h2v1h-2zM629 329h2v1h-2zM100 330h3v1h-3zM309 330h1v1h-1zM628 330h1v1h-1zM305 333h1v1h-1zM100 334h1v1h-1zM102 334h1v1h-1zM631 334h1v1h-1zM99 336h5v1h-5zM301 336h1v1h-1zM297 338h1v1h-1zM281 437h3v1h-3zM270 438h1v1h-1zM278 438h1v1h-1zM280 438h1v1h-1zM284 438h1v1h-1zM269 439h1v1h-1zM279 439h1v1h-1zM276 440h1v1h-1zM278 440h1v1h-1zM279 441h1v1h-1zM280 442h1v1h-1zM284 442h1v1h-1zM281 443h3v1h-3zM283 445h1v1h-1zM247 446h2v1h-2zM250 446h2v1h-2zM272 446h1v1h-1zM274 446h1v1h-1zM284 446h1v1h-1zM251 448h2v1h-2zM250 449h1v1h-1zM284 452h1v1h-1zM253 453h1v1h-1zM283 453h1v1h-1zM27 247h1v3h-1zM29 250h1v2h-1zM29 253h1v2h-1zM31 247h1v3h-1zM35 163h1v13h-1zM39 163h1v13h-1zM43 163h1v11h-1zM47 163h1v11h-1zM99 331h1v3h-1zM101 334h1v2h-1zM101 337h1v2h-1zM103 331h1v3h-1zM213 69h1v8h-1zM216 75h1v2h-1zM217 73h1v2h-1zM249 445h1v8h-1zM252 451h1v2h-1zM253 449h1v2h-1zM271 437h1v9h-1zM273 447h1v5h-1zM275 441h1v5h-1zM277 437h1v3h-1zM282 444h1v1h-1zM285 439h1v3h-1zM285 447h1v5h-1zM345 293h1v1h-1zM345 295h1v1h-1zM358 246h1v1h-1zM358 248h1v1h-1zM363 300h1v3h-1zM364 299h1v1h-1zM364 303h1v1h-1zM367 305h1v4h-1zM367 310h1v4h-1zM370 299h1v1h-1zM370 303h1v1h-1zM371 300h1v3h-1zM379 253h1v16h-1zM385 266h1v2h-1zM387 263h1v2h-1zM388 261h1v2h-1zM392 95h1v3h-1zM392 103h1v5h-1zM395 100h1v1h-1zM401 100h1v1h-1zM404 95h1v3h-1zM404 103h1v5h-1zM404 217h1v3h-1zM406 220h1v2h-1zM406 223h1v2h-1zM408 217h1v3h-1zM413 122h1v3h-1zM415 125h1v2h-1zM415 128h1v2h-1zM417 122h1v3h-1zM624 231h1v2h-1zM625 147h1v7h-1zM626 188h1v2h-1zM626 191h1v2h-1zM626 297h1v3h-1zM627 147h1v7h-1zM627 231h1v2h-1zM627 326h1v8h-1zM628 300h1v2h-1zM628 303h1v2h-1zM629 147h1v7h-1zM629 229h1v2h-1zM630 188h1v2h-1zM630 191h1v2h-1zM630 297h1v3h-1zM630 332h1v2h-1zM631 330h1v2h-1zM632 152h1v2h-1zM632 229h1v2h-1z"/><path fill="#ffffff" d="M226 12h11v1h-11zM238 12h14v1h-14zM214 13h12v1h-12zM252 13h12v1h-12zM206 14h8v1h-8zM264 14h8v1h-8zM198 15h8v1h-8zM272 15h8v1h-8zM194 16h4v1h-4zM280 16h4v1h-4zM190 17h4v1h-4zM284 17h4v1h-4zM186 18h4v1h-4zM288 18h4v1h-4zM183 19h3v1h-3zM292 19h4v1h-4zM179 20h4v1h-4zM296 20h3v1h-3zM175 21h4v1h-4zM299 21h4v1h-4zM171 22h4v1h-4zM303 22h4v1h-4zM167 23h4v1h-4zM307 23h4v1h-4zM165 24h2v1h-2zM311 24h3v1h-3zM163 25h2v1h-2zM314 25h2v1h-2zM160 26h3v1h-3zM316 26h2v1h-2zM157 27h3v1h-3zM318 27h3v1h-3zM155 28h2v1h-2zM321 28h2v1h-2zM153 29h2v1h-2zM323 29h3v1h-3zM150 30h3v1h-3zM326 30h2v1h-2zM148 31h2v1h-2zM328 31h2v1h-2zM145 32h3v1h-3zM330 32h3v1h-3zM143 33h2v1h-2zM333 33h3v1h-3zM141 34h1v1h-1zM336 34h2v1h-2zM139 35h2v1h-2zM338 35h1v1h-1zM137 36h2v1h-2zM339 36h2v1h-2zM136 37h1v1h-1zM341 37h2v1h-2zM134 38h2v1h-2zM343 38h2v1h-2zM132 39h2v1h-2zM345 39h1v1h-1zM130 40h2v1h-2zM346 40h2v1h-2zM128 41h2v1h-2zM348 41h3v1h-3zM125 42h3v1h-3zM351 42h2v1h-2zM123 43h2v1h-2zM353 43h2v1h-2zM122 44h1v1h-1zM355 44h2v1h-2zM121 45h1v1h-1zM357 45h1v1h-1zM120 46h1v1h-1zM358 46h1v1h-1zM119 47h1v1h-1zM359 47h1v1h-1zM117 48h2v1h-2zM225 48h12v1h-12zM238 48h17v1h-17zM360 48h2v1h-2zM115 49h2v1h-2zM215 49h10v1h-10zM254 49h10v1h-10zM362 49h1v1h-1zM113 50h2v1h-2zM208 50h7v1h-7zM264 50h6v1h-6zM363 50h2v1h-2zM112 51h1v1h-1zM206 51h2v1h-2zM270 51h4v1h-4zM365 51h2v1h-2zM110 52h2v1h-2zM198 52h8v1h-8zM274 52h6v1h-6zM367 52h2v1h-2zM109 53h1v1h-1zM195 53h3v1h-3zM280 53h4v1h-4zM369 53h1v1h-1zM107 54h2v1h-2zM192 54h3v1h-3zM284 54h2v1h-2zM370 54h2v1h-2zM106 55h1v1h-1zM186 55h6v1h-6zM286 55h7v1h-7zM372 55h1v1h-1zM105 56h1v1h-1zM182 56h4v1h-4zM293 56h3v1h-3zM365 56h1v1h-1zM373 56h1v1h-1zM104 57h1v1h-1zM179 57h3v1h-3zM296 57h4v1h-4zM364 57h1v1h-1zM374 57h1v1h-1zM102 58h2v1h-2zM177 58h2v1h-2zM300 58h2v1h-2zM375 58h1v1h-1zM100 59h2v1h-2zM175 59h2v1h-2zM302 59h2v1h-2zM376 59h2v1h-2zM99 60h1v1h-1zM174 60h1v1h-1zM226 60h11v1h-11zM238 60h16v1h-16zM304 60h2v1h-2zM362 60h1v1h-1zM378 60h2v1h-2zM98 61h1v1h-1zM170 61h4v1h-4zM217 61h9v1h-9zM254 61h8v1h-8zM306 61h3v1h-3zM380 61h1v1h-1zM97 62h1v1h-1zM167 62h3v1h-3zM210 62h7v1h-7zM262 62h7v1h-7zM309 62h3v1h-3zM381 62h1v1h-1zM96 63h1v1h-1zM165 63h2v1h-2zM204 63h6v1h-6zM269 63h6v1h-6zM312 63h2v1h-2zM360 63h1v1h-1zM382 63h1v1h-1zM94 64h2v1h-2zM163 64h2v1h-2zM201 64h3v1h-3zM275 64h3v1h-3zM314 64h2v1h-2zM359 64h1v1h-1zM383 64h2v1h-2zM93 65h1v1h-1zM161 65h2v1h-2zM195 65h6v1h-6zM278 65h7v1h-7zM316 65h2v1h-2zM385 65h1v1h-1zM92 66h1v1h-1zM157 66h4v1h-4zM191 66h4v1h-4zM285 66h2v1h-2zM318 66h3v1h-3zM386 66h1v1h-1zM91 67h1v1h-1zM156 67h1v1h-1zM189 67h3v1h-3zM287 67h3v1h-3zM321 67h2v1h-2zM357 67h1v1h-1zM387 67h1v1h-1zM90 68h1v1h-1zM154 68h2v1h-2zM186 68h3v1h-3zM290 68h3v1h-3zM323 68h2v1h-2zM388 68h1v1h-1zM88 69h2v1h-2zM152 69h2v1h-2zM183 69h3v1h-3zM293 69h3v1h-3zM325 69h2v1h-2zM389 69h2v1h-2zM87 70h1v1h-1zM150 70h2v1h-2zM180 70h3v1h-3zM296 70h4v1h-4zM327 70h2v1h-2zM355 70h1v1h-1zM391 70h1v1h-1zM86 71h1v1h-1zM148 71h2v1h-2zM176 71h4v1h-4zM299 71h3v1h-3zM329 71h2v1h-2zM354 71h1v1h-1zM392 71h1v1h-1zM85 72h1v1h-1zM147 72h1v1h-1zM174 72h3v1h-3zM302 72h3v1h-3zM331 72h1v1h-1zM393 72h1v1h-1zM84 73h1v1h-1zM145 73h2v1h-2zM171 73h3v1h-3zM305 73h3v1h-3zM332 73h2v1h-2zM394 73h1v1h-1zM83 74h1v1h-1zM143 74h2v1h-2zM169 74h2v1h-2zM308 74h2v1h-2zM334 74h2v1h-2zM352 74h1v1h-1zM395 74h1v1h-1zM82 75h1v1h-1zM141 75h3v1h-3zM167 75h2v1h-2zM310 75h2v1h-2zM313 75h1v1h-1zM336 75h2v1h-2zM396 75h1v1h-1zM81 76h1v1h-1zM139 76h2v1h-2zM165 76h2v1h-2zM312 76h1v1h-1zM338 76h2v1h-2zM397 76h1v1h-1zM138 77h1v1h-1zM162 77h3v1h-3zM313 77h3v1h-3zM340 77h1v1h-1zM350 77h1v1h-1zM136 78h2v1h-2zM161 78h2v1h-2zM316 78h2v1h-2zM341 78h2v1h-2zM349 78h1v1h-1zM79 79h1v1h-1zM135 79h1v1h-1zM159 79h2v1h-2zM318 79h2v1h-2zM343 79h1v1h-1zM399 79h1v1h-1zM77 80h2v1h-2zM133 80h2v1h-2zM157 80h2v1h-2zM320 80h2v1h-2zM344 80h2v1h-2zM400 80h2v1h-2zM76 81h1v1h-1zM132 81h1v1h-1zM155 81h2v1h-2zM322 81h2v1h-2zM346 81h2v1h-2zM402 81h1v1h-1zM75 82h1v1h-1zM131 82h1v1h-1zM153 82h2v1h-2zM324 82h2v1h-2zM403 82h1v1h-1zM74 83h1v1h-1zM130 83h1v1h-1zM151 83h2v1h-2zM326 83h2v1h-2zM348 83h1v1h-1zM404 83h1v1h-1zM73 84h1v1h-1zM128 84h2v1h-2zM150 84h1v1h-1zM228 84h10v1h-10zM239 84h12v1h-12zM327 84h2v1h-2zM349 84h2v1h-2zM405 84h1v1h-1zM72 85h1v1h-1zM127 85h1v1h-1zM148 85h2v1h-2zM220 85h8v1h-8zM251 85h8v1h-8zM329 85h2v1h-2zM345 85h1v1h-1zM351 85h1v1h-1zM406 85h1v1h-1zM71 86h1v1h-1zM125 86h2v1h-2zM146 86h2v1h-2zM211 86h9v1h-9zM259 86h8v1h-8zM331 86h2v1h-2zM352 86h2v1h-2zM407 86h1v1h-1zM70 87h1v1h-1zM124 87h1v1h-1zM131 87h1v1h-1zM144 87h2v1h-2zM206 87h5v1h-5zM267 87h5v1h-5zM333 87h2v1h-2zM354 87h1v1h-1zM408 87h1v1h-1zM123 88h1v1h-1zM143 88h1v1h-1zM204 88h2v1h-2zM272 88h3v1h-3zM343 88h1v1h-1zM355 88h1v1h-1zM122 89h1v1h-1zM142 89h1v1h-1zM198 89h6v1h-6zM275 89h5v1h-5zM335 89h2v1h-2zM356 89h1v1h-1zM68 90h1v1h-1zM120 90h2v1h-2zM133 90h1v1h-1zM140 90h1v1h-1zM196 90h2v1h-2zM280 90h3v1h-3zM337 90h2v1h-2zM357 90h2v1h-2zM410 90h1v1h-1zM67 91h1v1h-1zM119 91h1v1h-1zM138 91h2v1h-2zM193 91h3v1h-3zM283 91h3v1h-3zM339 91h1v1h-1zM359 91h1v1h-1zM411 91h1v1h-1zM66 92h1v1h-1zM117 92h2v1h-2zM137 92h1v1h-1zM188 92h5v1h-5zM286 92h5v1h-5zM333 92h1v1h-1zM340 92h2v1h-2zM360 92h2v1h-2zM412 92h1v1h-1zM65 93h1v1h-1zM116 93h1v1h-1zM135 93h2v1h-2zM142 93h1v1h-1zM185 93h3v1h-3zM291 93h2v1h-2zM342 93h2v1h-2zM359 93h1v1h-1zM362 93h1v1h-1zM413 93h1v1h-1zM115 94h1v1h-1zM134 94h1v1h-1zM183 94h2v1h-2zM293 94h3v1h-3zM344 94h1v1h-1zM358 94h1v1h-1zM363 94h1v1h-1zM114 95h1v1h-1zM116 95h1v1h-1zM132 95h2v1h-2zM180 95h3v1h-3zM296 95h2v1h-2zM345 95h2v1h-2zM364 95h1v1h-1zM63 96h1v1h-1zM112 96h2v1h-2zM117 96h1v1h-1zM131 96h1v1h-1zM144 96h1v1h-1zM178 96h2v1h-2zM298 96h3v1h-3zM347 96h1v1h-1zM365 96h2v1h-2zM415 96h1v1h-1zM62 97h1v1h-1zM111 97h1v1h-1zM130 97h1v1h-1zM176 97h2v1h-2zM301 97h2v1h-2zM330 97h1v1h-1zM348 97h1v1h-1zM356 97h1v1h-1zM367 97h1v1h-1zM416 97h1v1h-1zM61 98h1v1h-1zM110 98h1v1h-1zM129 98h1v1h-1zM175 98h1v1h-1zM303 98h1v1h-1zM349 98h1v1h-1zM355 98h1v1h-1zM368 98h1v1h-1zM417 98h1v1h-1zM109 99h1v1h-1zM119 99h1v1h-1zM128 99h1v1h-1zM146 99h1v1h-1zM173 99h2v1h-2zM304 99h2v1h-2zM350 99h1v1h-1zM354 99h1v1h-1zM369 99h1v1h-1zM418 99h1v1h-1zM108 100h1v1h-1zM120 100h1v1h-1zM127 100h1v1h-1zM147 100h1v1h-1zM170 100h3v1h-3zM306 100h2v1h-2zM328 100h1v1h-1zM351 100h1v1h-1zM370 100h1v1h-1zM107 101h1v1h-1zM121 101h1v1h-1zM125 101h2v1h-2zM168 101h2v1h-2zM308 101h3v1h-3zM352 101h2v1h-2zM371 101h1v1h-1zM106 102h1v1h-1zM122 102h1v1h-1zM124 102h1v1h-1zM165 102h3v1h-3zM311 102h2v1h-2zM354 102h1v1h-1zM58 103h1v1h-1zM105 103h1v1h-1zM123 103h1v1h-1zM149 103h1v1h-1zM164 103h1v1h-1zM313 103h2v1h-2zM355 103h1v1h-1zM372 103h2v1h-2zM57 104h1v1h-1zM104 104h1v1h-1zM122 104h1v1h-1zM163 104h1v1h-1zM315 104h1v1h-1zM356 104h1v1h-1zM371 104h1v1h-1zM374 104h1v1h-1zM421 104h1v1h-1zM56 105h1v1h-1zM120 105h2v1h-2zM161 105h2v1h-2zM316 105h2v1h-2zM325 105h1v1h-1zM357 105h2v1h-2zM370 105h1v1h-1zM375 105h1v1h-1zM422 105h1v1h-1zM55 106h1v1h-1zM102 106h2v1h-2zM119 106h1v1h-1zM151 106h1v1h-1zM159 106h2v1h-2zM318 106h2v1h-2zM359 106h1v1h-1zM376 106h1v1h-1zM423 106h1v1h-1zM101 107h1v1h-1zM104 107h1v1h-1zM118 107h1v1h-1zM158 107h1v1h-1zM320 107h1v1h-1zM360 107h1v1h-1zM377 107h1v1h-1zM100 108h1v1h-1zM105 108h1v1h-1zM117 108h1v1h-1zM156 108h2v1h-2zM321 108h1v1h-1zM361 108h1v1h-1zM368 108h1v1h-1zM378 108h1v1h-1zM53 109h1v1h-1zM99 109h1v1h-1zM106 109h2v1h-2zM116 109h1v1h-1zM153 109h1v1h-1zM155 109h1v1h-1zM362 109h1v1h-1zM367 109h1v1h-1zM379 109h1v1h-1zM425 109h1v1h-1zM98 110h1v1h-1zM108 110h1v1h-1zM115 110h1v1h-1zM154 110h1v1h-1zM324 110h1v1h-1zM363 110h1v1h-1zM366 110h1v1h-1zM380 110h1v1h-1zM52 111h2v1h-2zM97 111h1v1h-1zM109 111h1v1h-1zM152 111h2v1h-2zM325 111h2v1h-2zM364 111h2v1h-2zM381 111h1v1h-1zM54 112h2v1h-2zM110 112h1v1h-1zM150 112h2v1h-2zM327 112h2v1h-2zM427 112h1v1h-1zM56 113h1v1h-1zM113 113h1v1h-1zM149 113h1v1h-1zM329 113h1v1h-1zM365 113h1v1h-1zM57 114h1v1h-1zM95 114h1v1h-1zM111 114h2v1h-2zM147 114h2v1h-2zM330 114h1v1h-1zM366 114h2v1h-2zM383 114h1v1h-1zM58 115h2v1h-2zM94 115h1v1h-1zM110 115h1v1h-1zM146 115h1v1h-1zM331 115h2v1h-2zM368 115h1v1h-1zM384 115h1v1h-1zM49 116h1v1h-1zM60 116h1v1h-1zM93 116h1v1h-1zM109 116h1v1h-1zM145 116h1v1h-1zM333 116h1v1h-1zM369 116h1v1h-1zM383 116h1v1h-1zM385 116h1v1h-1zM61 117h2v1h-2zM108 117h1v1h-1zM144 117h1v1h-1zM334 117h1v1h-1zM370 117h1v1h-1zM382 117h1v1h-1zM63 118h1v1h-1zM107 118h1v1h-1zM143 118h1v1h-1zM335 118h1v1h-1zM371 118h1v1h-1zM380 118h2v1h-2zM47 119h1v1h-1zM64 119h1v1h-1zM91 119h1v1h-1zM93 119h1v1h-1zM106 119h1v1h-1zM141 119h2v1h-2zM336 119h1v1h-1zM372 119h1v1h-1zM379 119h1v1h-1zM387 119h1v1h-1zM431 119h1v1h-1zM46 120h1v1h-1zM65 120h2v1h-2zM94 120h1v1h-1zM140 120h1v1h-1zM337 120h2v1h-2zM378 120h1v1h-1zM432 120h1v1h-1zM45 121h1v1h-1zM67 121h1v1h-1zM95 121h2v1h-2zM138 121h2v1h-2zM339 121h2v1h-2zM377 121h1v1h-1zM433 121h1v1h-1zM68 122h2v1h-2zM89 122h1v1h-1zM97 122h1v1h-1zM104 122h1v1h-1zM137 122h1v1h-1zM341 122h1v1h-1zM374 122h1v1h-1zM376 122h1v1h-1zM389 122h1v1h-1zM434 122h1v1h-1zM70 123h1v1h-1zM88 123h1v1h-1zM98 123h1v1h-1zM103 123h1v1h-1zM136 123h1v1h-1zM342 123h1v1h-1zM375 123h1v1h-1zM390 123h1v1h-1zM71 124h1v1h-1zM87 124h1v1h-1zM99 124h1v1h-1zM102 124h1v1h-1zM135 124h1v1h-1zM343 124h1v1h-1zM376 124h1v1h-1zM391 124h1v1h-1zM72 125h2v1h-2zM100 125h2v1h-2zM134 125h1v1h-1zM344 125h1v1h-1zM74 126h1v1h-1zM133 126h1v1h-1zM345 126h1v1h-1zM75 127h2v1h-2zM85 127h1v1h-1zM100 127h1v1h-1zM132 127h1v1h-1zM346 127h1v1h-1zM378 127h1v1h-1zM393 127h1v1h-1zM77 128h1v1h-1zM99 128h1v1h-1zM347 128h1v1h-1zM379 128h1v1h-1zM78 129h1v1h-1zM98 129h1v1h-1zM380 129h1v1h-1zM79 130h2v1h-2zM83 130h1v1h-1zM97 130h1v1h-1zM129 130h2v1h-2zM381 130h1v1h-1zM392 130h2v1h-2zM395 130h1v1h-1zM81 131h2v1h-2zM96 131h1v1h-1zM128 131h1v1h-1zM349 131h2v1h-2zM382 131h1v1h-1zM391 131h1v1h-1zM396 131h1v1h-1zM83 132h2v1h-2zM127 132h1v1h-1zM319 132h1v1h-1zM351 132h1v1h-1zM389 132h2v1h-2zM397 132h1v1h-1zM39 133h1v1h-1zM85 133h1v1h-1zM126 133h1v1h-1zM352 133h1v1h-1zM388 133h1v1h-1zM86 134h2v1h-2zM94 134h1v1h-1zM125 134h1v1h-1zM353 134h1v1h-1zM384 134h1v1h-1zM386 134h2v1h-2zM79 135h1v1h-1zM88 135h1v1h-1zM124 135h1v1h-1zM354 135h1v1h-1zM399 135h1v1h-1zM89 136h2v1h-2zM123 136h1v1h-1zM355 136h1v1h-1zM441 136h1v1h-1zM91 137h2v1h-2zM122 137h1v1h-1zM316 137h1v1h-1zM356 137h1v1h-1zM386 137h1v1h-1zM77 138h1v1h-1zM401 138h1v1h-1zM91 139h1v1h-1zM35 140h1v1h-1zM314 140h1v1h-1zM358 140h1v1h-1zM89 142h1v1h-1zM119 142h1v1h-1zM389 142h1v1h-1zM442 142h3v1h-3zM88 143h1v1h-1zM118 143h1v1h-1zM360 143h1v1h-1zM390 143h1v1h-1zM404 143h1v1h-1zM440 143h2v1h-2zM117 144h1v1h-1zM361 144h1v1h-1zM401 144h2v1h-2zM438 144h2v1h-2zM116 145h1v1h-1zM362 145h1v1h-1zM399 145h2v1h-2zM436 145h2v1h-2zM73 146h2v1h-2zM363 146h1v1h-1zM397 146h2v1h-2zM434 146h2v1h-2zM72 147h1v1h-1zM75 147h2v1h-2zM395 147h2v1h-2zM406 147h1v1h-1zM432 147h2v1h-2zM77 148h2v1h-2zM114 148h1v1h-1zM393 148h2v1h-2zM430 148h2v1h-2zM79 149h2v1h-2zM113 149h1v1h-1zM365 149h1v1h-1zM428 149h2v1h-2zM81 150h2v1h-2zM394 150h1v1h-1zM426 150h2v1h-2zM83 151h2v1h-2zM424 151h2v1h-2zM422 152h2v1h-2zM420 153h2v1h-2zM110 154h1v1h-1zM368 154h1v1h-1zM418 154h2v1h-2zM369 155h1v1h-1zM416 155h2v1h-2zM414 156h2v1h-2zM108 157h1v1h-1zM410 157h4v1h-4zM107 158h1v1h-1zM371 158h1v1h-1zM408 158h2v1h-2zM399 159h1v1h-1zM406 159h2v1h-2zM396 160h2v1h-2zM404 160h2v1h-2zM67 161h2v1h-2zM78 161h1v1h-1zM394 161h2v1h-2zM402 161h2v1h-2zM69 162h2v1h-2zM80 162h2v1h-2zM392 162h2v1h-2zM400 162h1v1h-1zM71 163h2v1h-2zM82 163h2v1h-2zM104 163h1v1h-1zM374 163h1v1h-1zM390 163h2v1h-2zM73 164h2v1h-2zM84 164h2v1h-2zM375 164h1v1h-1zM388 164h2v1h-2zM75 165h1v1h-1zM86 165h2v1h-2zM386 165h2v1h-2zM76 166h1v1h-1zM88 166h2v1h-2zM384 166h2v1h-2zM90 167h2v1h-2zM382 167h2v1h-2zM92 168h2v1h-2zM380 168h2v1h-2zM94 169h2v1h-2zM377 169h1v1h-1zM379 169h1v1h-1zM96 170h2v1h-2zM98 171h3v1h-3zM416 173h1v1h-1zM418 173h1v1h-1zM412 174h4v1h-4zM98 175h1v1h-1zM380 175h1v1h-1zM409 175h3v1h-3zM59 176h2v1h-2zM406 176h1v1h-1zM408 176h1v1h-1zM61 177h4v1h-4zM65 178h4v1h-4zM69 179h1v1h-1zM71 179h1v1h-1zM422 188h1v1h-1zM418 189h4v1h-4zM414 190h4v1h-4zM411 191h1v1h-1zM413 191h1v1h-1zM54 192h1v1h-1zM56 192h2v1h-2zM58 193h5v1h-5zM63 194h2v1h-2zM66 194h1v1h-1zM424 205h2v1h-2zM427 205h1v1h-1zM419 206h5v1h-5zM416 207h3v1h-3zM52 208h2v1h-2zM54 209h6v1h-6zM60 210h2v1h-2zM424 221h5v1h-5zM14 222h8v1h-8zM418 222h6v1h-6zM22 223h18v1h-18zM40 224h8v1h-8zM49 225h11v1h-11zM61 225h1v1h-1zM419 238h11v1h-11zM2 239h237v1h-237zM240 239h62v1h-62zM303 239h11v1h-11zM315 239h6v1h-6zM322 239h28v1h-28zM351 239h26v1h-26zM378 239h5v1h-5zM384 239h5v1h-5zM390 239h87v1h-87zM49 240h11v1h-11zM372 242h2v1h-2zM370 243h2v1h-2zM368 244h2v1h-2zM366 245h2v1h-2zM364 246h2v1h-2zM365 251h1v1h-1zM417 253h1v1h-1zM419 253h11v1h-11zM367 254h1v1h-1zM431 254h8v1h-8zM439 255h18v1h-18zM55 256h6v1h-6zM457 256h8v1h-8zM50 257h5v1h-5zM369 257h1v1h-1zM371 260h1v1h-1zM417 268h2v1h-2zM419 269h6v1h-6zM425 270h2v1h-2zM60 271h3v1h-3zM55 272h5v1h-5zM51 273h1v1h-1zM53 273h2v1h-2zM356 280h2v1h-2zM358 281h3v1h-3zM361 282h3v1h-3zM364 283h2v1h-2zM412 284h1v1h-1zM414 284h2v1h-2zM416 285h5v1h-5zM421 286h2v1h-2zM424 286h1v1h-1zM65 287h1v1h-1zM67 287h1v1h-1zM61 288h4v1h-4zM57 289h4v1h-4zM56 290h1v1h-1zM350 296h1v1h-1zM351 297h2v1h-2zM353 298h2v1h-2zM355 299h2v1h-2zM407 299h1v1h-1zM409 299h1v1h-1zM357 300h2v1h-2zM410 300h4v1h-4zM414 301h4v1h-4zM70 302h1v1h-1zM72 302h1v1h-1zM418 302h2v1h-2zM67 303h3v1h-3zM98 303h1v1h-1zM380 303h1v1h-1zM63 304h4v1h-4zM60 305h1v1h-1zM62 305h1v1h-1zM378 307h3v1h-3zM381 308h2v1h-2zM99 309h1v1h-1zM101 309h1v1h-1zM383 309h2v1h-2zM97 310h2v1h-2zM385 310h2v1h-2zM95 311h2v1h-2zM387 311h2v1h-2zM93 312h2v1h-2zM389 312h2v1h-2zM402 312h1v1h-1zM91 313h2v1h-2zM391 313h2v1h-2zM403 313h1v1h-1zM89 314h2v1h-2zM103 314h1v1h-1zM338 314h1v1h-1zM393 314h2v1h-2zM404 314h2v1h-2zM87 315h2v1h-2zM104 315h1v1h-1zM339 315h2v1h-2zM374 315h1v1h-1zM395 315h2v1h-2zM406 315h2v1h-2zM78 316h1v1h-1zM85 316h2v1h-2zM341 316h1v1h-1zM397 316h2v1h-2zM408 316h2v1h-2zM75 317h2v1h-2zM83 317h2v1h-2zM342 317h2v1h-2zM400 317h1v1h-1zM410 317h2v1h-2zM73 318h2v1h-2zM81 318h2v1h-2zM344 318h2v1h-2zM71 319h2v1h-2zM79 319h1v1h-1zM346 319h1v1h-1zM69 320h2v1h-2zM107 320h1v1h-1zM371 320h1v1h-1zM65 321h4v1h-4zM370 321h1v1h-1zM63 322h2v1h-2zM61 323h2v1h-2zM109 323h1v1h-1zM59 324h2v1h-2zM110 324h1v1h-1zM368 324h1v1h-1zM57 325h2v1h-2zM55 326h2v1h-2zM53 327h2v1h-2zM394 327h2v1h-2zM51 328h2v1h-2zM84 328h1v1h-1zM326 328h1v1h-1zM396 328h2v1h-2zM49 329h2v1h-2zM113 329h1v1h-1zM327 329h1v1h-1zM365 329h1v1h-1zM398 329h2v1h-2zM47 330h2v1h-2zM84 330h2v1h-2zM328 330h1v1h-1zM364 330h1v1h-1zM400 330h2v1h-2zM45 331h2v1h-2zM72 331h1v1h-1zM82 331h2v1h-2zM329 331h1v1h-1zM402 331h2v1h-2zM406 331h1v1h-1zM43 332h2v1h-2zM80 332h2v1h-2zM115 332h1v1h-1zM330 332h1v1h-1zM404 332h2v1h-2zM41 333h2v1h-2zM78 333h2v1h-2zM116 333h1v1h-1zM331 333h1v1h-1zM362 333h1v1h-1zM39 334h2v1h-2zM76 334h2v1h-2zM117 334h1v1h-1zM332 334h1v1h-1zM361 334h1v1h-1zM37 335h2v1h-2zM74 335h1v1h-1zM88 335h1v1h-1zM118 335h1v1h-1zM333 335h1v1h-1zM360 335h1v1h-1zM390 335h1v1h-1zM34 336h3v1h-3zM89 336h1v1h-1zM359 336h1v1h-1zM389 336h1v1h-1zM120 338h1v1h-1zM314 338h1v1h-1zM443 338h1v1h-1zM387 339h1v1h-1zM77 340h1v1h-1zM401 340h1v1h-1zM92 341h1v1h-1zM122 341h1v1h-1zM316 341h1v1h-1zM356 341h1v1h-1zM386 341h2v1h-2zM37 342h1v1h-1zM123 342h1v1h-1zM355 342h1v1h-1zM388 342h2v1h-2zM79 343h1v1h-1zM124 343h1v1h-1zM354 343h1v1h-1zM390 343h1v1h-1zM399 343h1v1h-1zM91 344h2v1h-2zM94 344h1v1h-1zM125 344h1v1h-1zM353 344h1v1h-1zM384 344h1v1h-1zM391 344h2v1h-2zM90 345h1v1h-1zM126 345h1v1h-1zM352 345h1v1h-1zM393 345h1v1h-1zM439 345h1v1h-1zM81 346h1v1h-1zM88 346h2v1h-2zM127 346h1v1h-1zM319 346h1v1h-1zM351 346h1v1h-1zM394 346h2v1h-2zM82 347h1v1h-1zM87 347h1v1h-1zM96 347h1v1h-1zM128 347h2v1h-2zM300 347h1v1h-1zM350 347h1v1h-1zM382 347h1v1h-1zM396 347h2v1h-2zM83 348h1v1h-1zM85 348h2v1h-2zM97 348h1v1h-1zM348 348h2v1h-2zM381 348h1v1h-1zM395 348h1v1h-1zM398 348h2v1h-2zM98 349h1v1h-1zM380 349h1v1h-1zM400 349h1v1h-1zM99 350h1v1h-1zM131 350h1v1h-1zM379 350h1v1h-1zM401 350h1v1h-1zM85 351h1v1h-1zM100 351h1v1h-1zM132 351h1v1h-1zM346 351h1v1h-1zM378 351h1v1h-1zM393 351h1v1h-1zM402 351h2v1h-2zM133 352h1v1h-1zM345 352h1v1h-1zM404 352h1v1h-1zM134 353h1v1h-1zM344 353h1v1h-1zM377 353h2v1h-2zM405 353h2v1h-2zM87 354h1v1h-1zM102 354h1v1h-1zM135 354h1v1h-1zM343 354h1v1h-1zM376 354h1v1h-1zM379 354h1v1h-1zM391 354h1v1h-1zM407 354h1v1h-1zM88 355h1v1h-1zM103 355h1v1h-1zM136 355h1v1h-1zM342 355h1v1h-1zM375 355h1v1h-1zM380 355h1v1h-1zM390 355h1v1h-1zM408 355h1v1h-1zM44 356h1v1h-1zM89 356h1v1h-1zM102 356h1v1h-1zM104 356h1v1h-1zM137 356h1v1h-1zM305 356h1v1h-1zM341 356h1v1h-1zM374 356h1v1h-1zM381 356h1v1h-1zM389 356h1v1h-1zM409 356h2v1h-2zM45 357h1v1h-1zM101 357h1v1h-1zM138 357h2v1h-2zM339 357h2v1h-2zM382 357h2v1h-2zM411 357h1v1h-1zM433 357h1v1h-1zM46 358h1v1h-1zM100 358h1v1h-1zM140 358h2v1h-2zM338 358h1v1h-1zM384 358h1v1h-1zM412 358h2v1h-2zM432 358h1v1h-1zM47 359h1v1h-1zM91 359h1v1h-1zM99 359h1v1h-1zM106 359h1v1h-1zM142 359h1v1h-1zM336 359h2v1h-2zM372 359h1v1h-1zM385 359h1v1h-1zM387 359h1v1h-1zM414 359h1v1h-1zM431 359h1v1h-1zM97 360h2v1h-2zM107 360h1v1h-1zM143 360h1v1h-1zM335 360h1v1h-1zM371 360h1v1h-1zM415 360h1v1h-1zM96 361h1v1h-1zM108 361h1v1h-1zM144 361h1v1h-1zM334 361h1v1h-1zM370 361h1v1h-1zM416 361h2v1h-2zM93 362h1v1h-1zM95 362h1v1h-1zM109 362h1v1h-1zM145 362h1v1h-1zM333 362h1v1h-1zM369 362h1v1h-1zM385 362h1v1h-1zM418 362h1v1h-1zM429 362h1v1h-1zM94 363h1v1h-1zM110 363h1v1h-1zM146 363h2v1h-2zM332 363h1v1h-1zM368 363h1v1h-1zM384 363h1v1h-1zM419 363h2v1h-2zM95 364h1v1h-1zM111 364h2v1h-2zM148 364h1v1h-1zM330 364h2v1h-2zM366 364h2v1h-2zM383 364h1v1h-1zM421 364h1v1h-1zM113 365h1v1h-1zM149 365h1v1h-1zM329 365h1v1h-1zM365 365h1v1h-1zM422 365h1v1h-1zM51 366h1v1h-1zM150 366h2v1h-2zM327 366h2v1h-2zM368 366h1v1h-1zM423 366h2v1h-2zM97 367h1v1h-1zM113 367h2v1h-2zM152 367h2v1h-2zM325 367h2v1h-2zM369 367h1v1h-1zM381 367h1v1h-1zM425 367h2v1h-2zM98 368h1v1h-1zM112 368h1v1h-1zM115 368h1v1h-1zM154 368h1v1h-1zM324 368h1v1h-1zM363 368h1v1h-1zM370 368h1v1h-1zM380 368h1v1h-1zM53 369h1v1h-1zM99 369h1v1h-1zM111 369h1v1h-1zM116 369h1v1h-1zM323 369h1v1h-1zM325 369h1v1h-1zM362 369h1v1h-1zM371 369h2v1h-2zM379 369h1v1h-1zM425 369h1v1h-1zM100 370h1v1h-1zM110 370h1v1h-1zM117 370h1v1h-1zM157 370h1v1h-1zM321 370h2v1h-2zM361 370h1v1h-1zM373 370h1v1h-1zM378 370h1v1h-1zM101 371h1v1h-1zM118 371h1v1h-1zM158 371h1v1h-1zM320 371h1v1h-1zM360 371h1v1h-1zM374 371h1v1h-1zM377 371h1v1h-1zM55 372h1v1h-1zM102 372h1v1h-1zM119 372h1v1h-1zM159 372h2v1h-2zM318 372h2v1h-2zM327 372h1v1h-1zM359 372h1v1h-1zM375 372h2v1h-2zM423 372h1v1h-1zM56 373h1v1h-1zM103 373h1v1h-1zM108 373h1v1h-1zM120 373h2v1h-2zM153 373h1v1h-1zM161 373h2v1h-2zM316 373h2v1h-2zM357 373h2v1h-2zM422 373h1v1h-1zM57 374h1v1h-1zM104 374h1v1h-1zM107 374h1v1h-1zM122 374h1v1h-1zM163 374h1v1h-1zM315 374h1v1h-1zM356 374h1v1h-1zM374 374h1v1h-1zM421 374h1v1h-1zM105 375h2v1h-2zM123 375h1v1h-1zM164 375h2v1h-2zM314 375h1v1h-1zM329 375h1v1h-1zM355 375h1v1h-1zM373 375h1v1h-1zM420 375h1v1h-1zM124 376h1v1h-1zM166 376h2v1h-2zM311 376h3v1h-3zM354 376h1v1h-1zM356 376h1v1h-1zM372 376h1v1h-1zM107 377h1v1h-1zM125 377h2v1h-2zM168 377h3v1h-3zM309 377h2v1h-2zM352 377h2v1h-2zM357 377h1v1h-1zM371 377h1v1h-1zM108 378h1v1h-1zM127 378h1v1h-1zM150 378h1v1h-1zM171 378h2v1h-2zM306 378h3v1h-3zM331 378h1v1h-1zM351 378h1v1h-1zM358 378h1v1h-1zM370 378h1v1h-1zM60 379h1v1h-1zM109 379h1v1h-1zM124 379h1v1h-1zM128 379h1v1h-1zM173 379h2v1h-2zM304 379h2v1h-2zM332 379h1v1h-1zM350 379h1v1h-1zM359 379h1v1h-1zM369 379h1v1h-1zM61 380h1v1h-1zM110 380h1v1h-1zM123 380h1v1h-1zM129 380h1v1h-1zM175 380h1v1h-1zM303 380h1v1h-1zM349 380h1v1h-1zM368 380h1v1h-1zM417 380h1v1h-1zM62 381h1v1h-1zM111 381h1v1h-1zM122 381h1v1h-1zM130 381h1v1h-1zM148 381h1v1h-1zM176 381h2v1h-2zM301 381h2v1h-2zM348 381h1v1h-1zM367 381h1v1h-1zM416 381h1v1h-1zM63 382h1v1h-1zM112 382h2v1h-2zM131 382h1v1h-1zM178 382h3v1h-3zM299 382h2v1h-2zM334 382h1v1h-1zM347 382h1v1h-1zM361 382h1v1h-1zM365 382h2v1h-2zM415 382h1v1h-1zM114 383h1v1h-1zM132 383h2v1h-2zM181 383h2v1h-2zM296 383h3v1h-3zM345 383h2v1h-2zM362 383h1v1h-1zM364 383h1v1h-1zM115 384h1v1h-1zM120 384h1v1h-1zM134 384h1v1h-1zM183 384h3v1h-3zM294 384h2v1h-2zM344 384h1v1h-1zM363 384h1v1h-1zM65 385h1v1h-1zM116 385h1v1h-1zM119 385h1v1h-1zM135 385h2v1h-2zM186 385h2v1h-2zM291 385h3v1h-3zM336 385h1v1h-1zM342 385h2v1h-2zM362 385h1v1h-1zM413 385h1v1h-1zM66 386h1v1h-1zM117 386h2v1h-2zM137 386h2v1h-2zM145 386h1v1h-1zM188 386h5v1h-5zM286 386h5v1h-5zM341 386h1v1h-1zM360 386h2v1h-2zM412 386h1v1h-1zM67 387h1v1h-1zM119 387h1v1h-1zM139 387h1v1h-1zM193 387h3v1h-3zM283 387h3v1h-3zM339 387h2v1h-2zM359 387h1v1h-1zM411 387h1v1h-1zM68 388h1v1h-1zM120 388h2v1h-2zM140 388h2v1h-2zM196 388h3v1h-3zM281 388h2v1h-2zM338 388h1v1h-1zM345 388h1v1h-1zM357 388h2v1h-2zM410 388h1v1h-1zM122 389h1v1h-1zM142 389h2v1h-2zM199 389h5v1h-5zM275 389h6v1h-6zM336 389h1v1h-1zM356 389h1v1h-1zM123 390h1v1h-1zM135 390h1v1h-1zM204 390h3v1h-3zM273 390h2v1h-2zM335 390h1v1h-1zM355 390h1v1h-1zM70 391h1v1h-1zM124 391h1v1h-1zM144 391h2v1h-2zM207 391h5v1h-5zM268 391h5v1h-5zM333 391h2v1h-2zM347 391h1v1h-1zM354 391h1v1h-1zM408 391h1v1h-1zM71 392h1v1h-1zM125 392h2v1h-2zM146 392h2v1h-2zM212 392h8v1h-8zM259 392h9v1h-9zM331 392h2v1h-2zM352 392h2v1h-2zM407 392h1v1h-1zM72 393h1v1h-1zM127 393h1v1h-1zM133 393h1v1h-1zM148 393h2v1h-2zM220 393h8v1h-8zM251 393h8v1h-8zM329 393h2v1h-2zM351 393h1v1h-1zM406 393h1v1h-1zM73 394h1v1h-1zM128 394h2v1h-2zM150 394h2v1h-2zM228 394h12v1h-12zM241 394h10v1h-10zM328 394h1v1h-1zM349 394h2v1h-2zM405 394h1v1h-1zM74 395h1v1h-1zM130 395h1v1h-1zM151 395h2v1h-2zM326 395h2v1h-2zM348 395h1v1h-1zM404 395h1v1h-1zM75 396h1v1h-1zM153 396h2v1h-2zM324 396h2v1h-2zM347 396h1v1h-1zM403 396h1v1h-1zM76 397h1v1h-1zM131 397h2v1h-2zM155 397h2v1h-2zM322 397h2v1h-2zM346 397h1v1h-1zM402 397h1v1h-1zM77 398h2v1h-2zM133 398h2v1h-2zM157 398h2v1h-2zM320 398h2v1h-2zM344 398h2v1h-2zM400 398h2v1h-2zM79 399h1v1h-1zM135 399h1v1h-1zM159 399h2v1h-2zM318 399h2v1h-2zM343 399h1v1h-1zM399 399h1v1h-1zM129 400h1v1h-1zM136 400h2v1h-2zM161 400h2v1h-2zM316 400h2v1h-2zM341 400h2v1h-2zM128 401h1v1h-1zM138 401h1v1h-1zM163 401h3v1h-3zM314 401h3v1h-3zM340 401h1v1h-1zM81 402h1v1h-1zM139 402h2v1h-2zM166 402h1v1h-1zM312 402h2v1h-2zM338 402h2v1h-2zM397 402h1v1h-1zM82 403h1v1h-1zM141 403h2v1h-2zM165 403h1v1h-1zM167 403h2v1h-2zM310 403h2v1h-2zM335 403h3v1h-3zM396 403h1v1h-1zM83 404h1v1h-1zM126 404h1v1h-1zM143 404h2v1h-2zM169 404h2v1h-2zM308 404h2v1h-2zM334 404h2v1h-2zM395 404h1v1h-1zM84 405h1v1h-1zM145 405h2v1h-2zM171 405h3v1h-3zM305 405h3v1h-3zM332 405h2v1h-2zM394 405h1v1h-1zM85 406h1v1h-1zM147 406h1v1h-1zM174 406h3v1h-3zM302 406h3v1h-3zM331 406h1v1h-1zM393 406h1v1h-1zM86 407h1v1h-1zM124 407h1v1h-1zM148 407h2v1h-2zM177 407h3v1h-3zM299 407h4v1h-4zM329 407h2v1h-2zM392 407h1v1h-1zM87 408h1v1h-1zM123 408h1v1h-1zM150 408h2v1h-2zM179 408h4v1h-4zM296 408h3v1h-3zM327 408h2v1h-2zM391 408h1v1h-1zM88 409h2v1h-2zM152 409h2v1h-2zM183 409h3v1h-3zM293 409h3v1h-3zM325 409h2v1h-2zM389 409h2v1h-2zM90 410h1v1h-1zM154 410h2v1h-2zM186 410h3v1h-3zM290 410h3v1h-3zM323 410h2v1h-2zM388 410h1v1h-1zM91 411h1v1h-1zM121 411h1v1h-1zM156 411h2v1h-2zM189 411h3v1h-3zM287 411h3v1h-3zM322 411h1v1h-1zM387 411h1v1h-1zM92 412h1v1h-1zM158 412h3v1h-3zM192 412h2v1h-2zM284 412h4v1h-4zM318 412h4v1h-4zM386 412h1v1h-1zM93 413h1v1h-1zM161 413h2v1h-2zM194 413h7v1h-7zM278 413h6v1h-6zM316 413h2v1h-2zM385 413h1v1h-1zM94 414h2v1h-2zM119 414h1v1h-1zM163 414h2v1h-2zM201 414h3v1h-3zM275 414h3v1h-3zM314 414h2v1h-2zM383 414h2v1h-2zM96 415h1v1h-1zM118 415h1v1h-1zM165 415h2v1h-2zM204 415h6v1h-6zM269 415h6v1h-6zM312 415h2v1h-2zM382 415h1v1h-1zM97 416h1v1h-1zM167 416h3v1h-3zM210 416h7v1h-7zM262 416h7v1h-7zM309 416h3v1h-3zM381 416h1v1h-1zM98 417h1v1h-1zM170 417h3v1h-3zM217 417h8v1h-8zM253 417h9v1h-9zM305 417h4v1h-4zM380 417h1v1h-1zM99 418h2v1h-2zM116 418h1v1h-1zM173 418h2v1h-2zM225 418h16v1h-16zM242 418h11v1h-11zM304 418h1v1h-1zM379 418h1v1h-1zM101 419h2v1h-2zM175 419h2v1h-2zM302 419h2v1h-2zM377 419h2v1h-2zM103 420h1v1h-1zM177 420h2v1h-2zM300 420h2v1h-2zM375 420h2v1h-2zM104 421h1v1h-1zM114 421h1v1h-1zM179 421h4v1h-4zM297 421h3v1h-3zM374 421h1v1h-1zM105 422h1v1h-1zM113 422h1v1h-1zM183 422h3v1h-3zM293 422h4v1h-4zM373 422h1v1h-1zM106 423h1v1h-1zM186 423h7v1h-7zM287 423h6v1h-6zM372 423h1v1h-1zM107 424h2v1h-2zM193 424h2v1h-2zM284 424h3v1h-3zM370 424h2v1h-2zM109 425h1v1h-1zM195 425h4v1h-4zM281 425h3v1h-3zM369 425h1v1h-1zM110 426h2v1h-2zM199 426h6v1h-6zM273 426h8v1h-8zM367 426h2v1h-2zM112 427h2v1h-2zM205 427h4v1h-4zM271 427h2v1h-2zM366 427h1v1h-1zM114 428h2v1h-2zM209 428h6v1h-6zM264 428h7v1h-7zM364 428h2v1h-2zM116 429h1v1h-1zM215 429h10v1h-10zM254 429h10v1h-10zM362 429h2v1h-2zM117 430h2v1h-2zM224 430h17v1h-17zM242 430h12v1h-12zM360 430h2v1h-2zM119 431h1v1h-1zM359 431h1v1h-1zM120 432h1v1h-1zM358 432h1v1h-1zM121 433h1v1h-1zM357 433h1v1h-1zM122 434h2v1h-2zM356 434h1v1h-1zM124 435h2v1h-2zM354 435h2v1h-2zM126 436h2v1h-2zM351 436h3v1h-3zM128 437h3v1h-3zM349 437h2v1h-2zM131 438h2v1h-2zM347 438h2v1h-2zM133 439h1v1h-1zM345 439h2v1h-2zM134 440h2v1h-2zM343 440h2v1h-2zM136 441h2v1h-2zM342 441h1v1h-1zM138 442h2v1h-2zM340 442h2v1h-2zM140 443h1v1h-1zM338 443h2v1h-2zM141 444h2v1h-2zM337 444h1v1h-1zM143 445h3v1h-3zM334 445h2v1h-2zM146 446h3v1h-3zM331 446h3v1h-3zM149 447h2v1h-2zM329 447h2v1h-2zM151 448h2v1h-2zM326 448h3v1h-3zM153 449h3v1h-3zM324 449h2v1h-2zM156 450h2v1h-2zM322 450h2v1h-2zM158 451h3v1h-3zM319 451h3v1h-3zM161 452h2v1h-2zM316 452h3v1h-3zM163 453h2v1h-2zM314 453h2v1h-2zM165 454h3v1h-3zM312 454h2v1h-2zM168 455h4v1h-4zM308 455h4v1h-4zM172 456h4v1h-4zM304 456h4v1h-4zM176 457h4v1h-4zM300 457h4v1h-4zM180 458h3v1h-3zM296 458h4v1h-4zM183 459h4v1h-4zM293 459h3v1h-3zM187 460h4v1h-4zM289 460h4v1h-4zM191 461h4v1h-4zM285 461h4v1h-4zM195 462h4v1h-4zM281 462h4v1h-4zM199 463h8v1h-8zM273 463h8v1h-8zM207 464h8v1h-8zM265 464h8v1h-8zM215 465h12v1h-12zM253 465h12v1h-12zM227 466h14v1h-14zM242 466h11v1h-11zM12 227h1v12h-1zM12 240h1v13h-1zM13 215h1v12h-1zM13 253h1v12h-1zM14 207h1v8h-1zM14 265h1v8h-1zM15 199h1v8h-1zM15 273h1v8h-1zM16 195h1v4h-1zM16 281h1v4h-1zM17 191h1v4h-1zM17 285h1v4h-1zM18 187h1v4h-1zM18 289h1v4h-1zM19 183h1v4h-1zM19 293h1v3h-1zM20 180h1v3h-1zM20 296h1v4h-1zM21 176h1v4h-1zM21 300h1v4h-1zM22 172h1v4h-1zM22 304h1v4h-1zM23 168h1v4h-1zM23 308h1v4h-1zM24 165h1v3h-1zM24 312h1v2h-1zM25 163h1v2h-1zM25 314h1v2h-1zM26 161h1v2h-1zM26 316h1v3h-1zM27 158h1v3h-1zM27 319h1v3h-1zM28 156h1v2h-1zM28 322h1v2h-1zM29 153h1v3h-1zM29 324h1v2h-1zM30 151h1v2h-1zM30 326h1v3h-1zM31 149h1v2h-1zM31 329h1v2h-1zM32 146h1v3h-1zM32 331h1v3h-1zM33 143h1v3h-1zM33 334h1v2h-1zM34 141h1v2h-1zM34 337h1v1h-1zM35 338h1v2h-1zM36 138h1v2h-1zM36 340h1v2h-1zM37 136h1v2h-1zM38 134h1v2h-1zM38 343h1v2h-1zM39 345h1v2h-1zM40 131h1v2h-1zM40 347h1v2h-1zM41 128h1v3h-1zM41 349h1v2h-1zM42 126h1v2h-1zM42 351h1v3h-1zM43 124h1v2h-1zM43 354h1v2h-1zM44 122h1v2h-1zM48 117h1v2h-1zM48 224h1v15h-1zM48 240h1v14h-1zM48 360h1v2h-1zM49 215h1v10h-1zM49 254h1v10h-1zM49 362h1v2h-1zM50 114h1v2h-1zM50 209h1v6h-1zM50 264h1v7h-1zM50 364h1v2h-1zM51 112h1v2h-1zM51 205h1v4h-1zM51 271h1v2h-1zM52 110h1v1h-1zM52 199h1v6h-1zM52 273h1v8h-1zM52 367h1v2h-1zM53 195h1v4h-1zM53 281h1v3h-1zM54 107h1v2h-1zM54 193h1v2h-1zM54 284h1v3h-1zM54 370h1v2h-1zM55 186h1v7h-1zM55 287h1v6h-1zM56 183h1v3h-1zM56 293h1v4h-1zM57 179h1v4h-1zM57 297h1v3h-1zM58 177h1v2h-1zM58 300h1v2h-1zM58 375h1v2h-1zM59 101h1v2h-1zM59 175h1v1h-1zM59 302h1v2h-1zM59 377h1v2h-1zM60 99h1v2h-1zM60 173h1v2h-1zM60 225h1v14h-1zM60 240h1v13h-1zM60 304h1v1h-1zM61 170h1v3h-1zM61 217h1v8h-1zM61 253h1v9h-1zM61 305h1v4h-1zM62 167h1v3h-1zM62 210h1v7h-1zM62 262h1v7h-1zM62 309h1v3h-1zM63 165h1v2h-1zM63 204h1v6h-1zM63 269h1v6h-1zM63 312h1v2h-1zM64 94h1v2h-1zM64 163h1v2h-1zM64 201h1v3h-1zM64 275h1v3h-1zM64 314h1v2h-1zM64 383h1v2h-1zM65 161h1v2h-1zM65 194h1v7h-1zM65 278h1v6h-1zM65 316h1v2h-1zM66 158h1v3h-1zM66 192h1v2h-1zM66 284h1v4h-1zM66 318h1v3h-1zM67 156h1v2h-1zM67 189h1v3h-1zM67 288h1v2h-1zM67 322h1v1h-1zM68 154h1v2h-1zM68 186h1v3h-1zM68 290h1v3h-1zM68 323h1v2h-1zM69 88h1v2h-1zM69 152h1v2h-1zM69 183h1v3h-1zM69 293h1v3h-1zM69 325h1v2h-1zM69 389h1v2h-1zM70 150h1v2h-1zM70 179h1v4h-1zM70 296h1v3h-1zM70 327h1v2h-1zM71 148h1v2h-1zM71 177h1v2h-1zM71 299h1v4h-1zM71 329h1v2h-1zM72 174h1v3h-1zM72 303h1v2h-1zM73 145h1v1h-1zM73 171h1v3h-1zM73 305h1v3h-1zM73 332h1v2h-1zM74 143h1v2h-1zM74 169h1v2h-1zM74 308h1v2h-1zM74 334h1v1h-1zM75 141h1v2h-1zM75 167h1v2h-1zM75 310h1v2h-1zM75 335h1v3h-1zM76 139h1v2h-1zM76 312h1v2h-1zM76 338h1v2h-1zM77 163h1v3h-1zM77 314h1v3h-1zM78 136h1v2h-1zM78 162h1v1h-1zM78 317h1v1h-1zM78 341h1v2h-1zM79 159h1v3h-1zM79 318h1v1h-1zM80 77h1v2h-1zM80 133h1v2h-1zM80 157h1v2h-1zM80 319h1v3h-1zM80 344h1v2h-1zM80 400h1v2h-1zM81 132h1v1h-1zM81 155h1v2h-1zM81 322h1v2h-1zM82 153h1v2h-1zM82 324h1v2h-1zM83 152h1v1h-1zM83 326h1v2h-1zM84 128h1v2h-1zM84 150h1v1h-1zM84 228h1v11h-1zM84 240h1v11h-1zM84 349h1v2h-1zM85 148h1v2h-1zM85 220h1v8h-1zM85 251h1v8h-1zM85 329h1v1h-1zM86 125h1v2h-1zM86 146h1v2h-1zM86 212h1v8h-1zM86 259h1v9h-1zM86 331h1v2h-1zM86 352h1v2h-1zM87 144h1v2h-1zM87 207h1v5h-1zM87 268h1v5h-1zM87 333h1v2h-1zM88 204h1v3h-1zM88 273h1v2h-1zM89 199h1v5h-1zM89 275h1v6h-1zM90 120h1v2h-1zM90 140h1v2h-1zM90 196h1v3h-1zM90 281h1v2h-1zM90 337h1v2h-1zM90 357h1v2h-1zM91 193h1v3h-1zM91 283h1v3h-1zM91 339h1v2h-1zM92 117h1v2h-1zM92 138h1v1h-1zM92 188h1v5h-1zM92 286h1v5h-1zM92 360h1v2h-1zM93 135h1v2h-1zM93 186h1v2h-1zM93 291h1v3h-1zM93 342h1v2h-1zM94 183h1v3h-1zM94 294h1v2h-1zM95 132h1v2h-1zM95 181h1v2h-1zM95 296h1v3h-1zM95 345h1v2h-1zM96 112h1v2h-1zM96 178h1v3h-1zM96 299h1v2h-1zM96 365h1v2h-1zM97 176h1v2h-1zM97 301h1v2h-1zM99 173h1v2h-1zM99 304h1v2h-1zM100 172h1v1h-1zM100 306h1v4h-1zM101 126h1v1h-1zM101 168h1v3h-1zM101 310h1v1h-1zM101 352h1v2h-1zM102 166h1v2h-1zM102 311h1v3h-1zM103 105h1v1h-1zM103 164h1v2h-1zM105 120h1v2h-1zM105 161h1v2h-1zM105 316h1v2h-1zM105 357h1v2h-1zM106 159h1v2h-1zM106 318h1v2h-1zM106 376h1v1h-1zM108 321h1v2h-1zM109 155h1v2h-1zM109 371h1v2h-1zM111 113h1v1h-1zM111 152h1v2h-1zM111 325h1v2h-1zM111 425h1v1h-1zM112 150h1v2h-1zM112 327h1v2h-1zM112 423h1v2h-1zM114 111h1v2h-1zM114 330h1v2h-1zM114 366h1v1h-1zM115 146h1v2h-1zM115 419h1v2h-1zM117 416h1v2h-1zM118 97h1v2h-1zM119 336h1v2h-1zM120 140h1v2h-1zM120 412h1v2h-1zM121 138h1v2h-1zM121 339h1v2h-1zM121 382h1v2h-1zM122 409h1v2h-1zM125 378h1v1h-1zM125 405h1v2h-1zM127 402h1v2h-1zM130 85h1v2h-1zM130 348h1v2h-1zM130 398h1v2h-1zM131 128h1v2h-1zM131 396h1v1h-1zM132 88h1v2h-1zM132 394h1v2h-1zM134 91h1v2h-1zM134 391h1v2h-1zM136 388h1v2h-1zM137 387h1v1h-1zM141 90h1v3h-1zM142 34h1v3h-1zM143 37h1v2h-1zM143 94h1v2h-1zM143 390h1v1h-1zM144 39h1v2h-1zM144 76h1v2h-1zM144 387h1v2h-1zM145 41h1v2h-1zM145 78h1v2h-1zM145 97h1v2h-1zM146 43h1v2h-1zM146 80h1v2h-1zM146 384h1v2h-1zM146 404h1v1h-1zM147 45h1v2h-1zM147 82h1v2h-1zM147 382h1v2h-1zM147 402h1v2h-1zM148 47h1v2h-1zM148 84h1v1h-1zM148 101h1v2h-1zM148 400h1v2h-1zM149 49h1v2h-1zM149 379h1v2h-1zM149 398h1v2h-1zM150 51h1v2h-1zM150 104h1v2h-1zM150 396h1v2h-1zM151 53h1v2h-1zM151 376h1v2h-1zM152 55h1v2h-1zM152 107h1v2h-1zM152 374h1v2h-1zM153 57h1v2h-1zM154 59h1v2h-1zM154 371h1v2h-1zM155 61h1v2h-1zM155 369h1v2h-1zM156 63h1v2h-1zM157 65h1v1h-1zM157 67h1v2h-1zM158 69h1v2h-1zM159 71h1v2h-1zM160 73h1v2h-1zM161 75h1v2h-1zM161 410h1v2h-1zM162 408h1v2h-1zM163 406h1v2h-1zM164 404h1v2h-1zM173 60h1v1h-1zM173 62h1v1h-1zM174 63h1v4h-1zM175 67h1v3h-1zM176 70h1v1h-1zM176 418h1v1h-1zM177 414h1v4h-1zM178 410h1v4h-1zM179 409h1v1h-1zM188 56h1v1h-1zM189 57h1v4h-1zM190 61h1v4h-1zM191 65h1v1h-1zM192 421h1v2h-1zM192 424h1v1h-1zM193 416h1v5h-1zM194 412h1v1h-1zM194 414h1v2h-1zM205 51h1v1h-1zM205 53h1v2h-1zM206 55h1v5h-1zM207 60h1v3h-1zM208 425h1v2h-1zM209 419h1v6h-1zM210 417h1v2h-1zM221 50h1v5h-1zM222 55h1v6h-1zM222 457h1v8h-1zM223 439h1v18h-1zM224 431h1v8h-1zM225 417h1v1h-1zM225 419h1v11h-1zM237 2h1v60h-1zM238 49h1v11h-1zM238 62h1v88h-1zM238 151h1v29h-1zM239 180h1v59h-1zM239 240h1v59h-1zM240 299h1v118h-1zM240 419h1v11h-1zM241 417h1v60h-1zM253 49h1v11h-1zM253 61h1v1h-1zM254 40h1v8h-1zM255 22h1v18h-1zM256 14h1v8h-1zM256 418h1v6h-1zM257 424h1v5h-1zM268 60h1v2h-1zM269 54h1v6h-1zM270 52h1v2h-1zM271 416h1v3h-1zM272 419h1v5h-1zM273 424h1v2h-1zM273 427h1v1h-1zM284 63h1v2h-1zM284 66h1v1h-1zM285 58h1v5h-1zM286 54h1v1h-1zM286 56h1v2h-1zM287 413h1v1h-1zM288 414h1v4h-1zM289 418h1v4h-1zM290 422h1v1h-1zM299 69h1v1h-1zM300 65h1v4h-1zM301 61h1v4h-1zM301 348h1v2h-1zM302 60h1v1h-1zM302 350h1v2h-1zM302 408h1v1h-1zM303 352h1v2h-1zM303 409h1v3h-1zM304 354h1v2h-1zM304 412h1v4h-1zM305 416h1v1h-1zM305 418h1v1h-1zM314 73h1v2h-1zM315 71h1v2h-1zM315 138h1v2h-1zM315 339h1v2h-1zM316 69h1v2h-1zM317 67h1v2h-1zM317 135h1v2h-1zM317 342h1v2h-1zM317 402h1v2h-1zM318 133h1v2h-1zM318 344h1v2h-1zM318 404h1v2h-1zM319 406h1v2h-1zM320 408h1v2h-1zM321 410h1v2h-1zM321 413h1v1h-1zM322 414h1v2h-1zM323 108h1v2h-1zM323 416h1v2h-1zM324 106h1v2h-1zM324 418h1v2h-1zM325 420h1v2h-1zM326 103h1v2h-1zM326 370h1v2h-1zM326 422h1v2h-1zM327 101h1v2h-1zM327 424h1v2h-1zM328 81h1v2h-1zM328 373h1v2h-1zM328 426h1v2h-1zM329 79h1v2h-1zM329 98h1v2h-1zM329 428h1v2h-1zM330 77h1v2h-1zM330 376h1v2h-1zM330 394h1v1h-1zM330 430h1v2h-1zM331 75h1v2h-1zM331 95h1v2h-1zM331 395h1v2h-1zM331 432h1v2h-1zM332 74h1v1h-1zM332 93h1v2h-1zM332 397h1v2h-1zM332 434h1v2h-1zM333 380h1v2h-1zM333 399h1v2h-1zM333 436h1v2h-1zM334 90h1v2h-1zM334 401h1v2h-1zM334 438h1v2h-1zM335 88h1v1h-1zM335 383h1v2h-1zM335 440h1v2h-1zM336 442h1v3h-1zM337 386h1v3h-1zM341 91h1v1h-1zM342 89h1v2h-1zM344 86h1v2h-1zM344 386h1v2h-1zM346 83h1v2h-1zM346 389h1v2h-1zM347 82h1v1h-1zM347 349h1v2h-1zM348 79h1v2h-1zM348 129h1v2h-1zM348 392h1v2h-1zM351 75h1v2h-1zM353 72h1v2h-1zM353 100h1v1h-1zM356 68h1v2h-1zM357 95h1v2h-1zM357 138h1v2h-1zM357 339h1v2h-1zM358 65h1v2h-1zM358 337h1v2h-1zM359 141h1v2h-1zM360 380h1v2h-1zM361 61h1v2h-1zM363 58h1v2h-1zM363 247h1v2h-1zM363 331h1v2h-1zM364 112h1v1h-1zM364 147h1v2h-1zM364 249h1v2h-1zM364 366h1v2h-1zM366 54h1v2h-1zM366 150h1v2h-1zM366 252h1v2h-1zM366 327h1v2h-1zM367 53h1v1h-1zM367 152h1v2h-1zM367 325h1v2h-1zM367 365h1v1h-1zM368 255h1v2h-1zM369 106h1v2h-1zM369 322h1v2h-1zM370 156h1v2h-1zM370 258h1v2h-1zM372 102h1v1h-1zM372 159h1v2h-1zM372 318h1v2h-1zM373 120h1v2h-1zM373 161h1v2h-1zM373 316h1v2h-1zM373 357h1v2h-1zM375 313h1v2h-1zM375 373h1v1h-1zM376 165h1v3h-1zM376 311h1v2h-1zM377 125h1v2h-1zM377 168h1v1h-1zM377 308h1v3h-1zM377 352h1v1h-1zM378 169h1v4h-1zM378 306h1v1h-1zM379 173h1v2h-1zM379 304h1v2h-1zM381 176h1v2h-1zM381 301h1v2h-1zM382 112h1v2h-1zM382 178h1v2h-1zM382 298h1v3h-1zM382 365h1v2h-1zM383 132h1v2h-1zM383 180h1v3h-1zM383 296h1v2h-1zM383 345h1v2h-1zM384 183h1v2h-1zM384 293h1v3h-1zM385 135h1v2h-1zM385 185h1v3h-1zM385 291h1v2h-1zM385 342h1v2h-1zM386 117h1v2h-1zM386 188h1v5h-1zM386 286h1v5h-1zM386 340h1v1h-1zM386 360h1v2h-1zM387 138h1v2h-1zM387 193h1v3h-1zM387 283h1v3h-1zM388 120h1v2h-1zM388 140h1v2h-1zM388 196h1v2h-1zM388 280h1v3h-1zM388 337h1v2h-1zM388 357h1v2h-1zM389 198h1v6h-1zM389 275h1v5h-1zM390 204h1v2h-1zM390 272h1v3h-1zM391 144h1v2h-1zM391 206h1v5h-1zM391 267h1v5h-1zM391 333h1v2h-1zM392 125h1v2h-1zM392 146h1v2h-1zM392 211h1v9h-1zM392 259h1v8h-1zM392 331h1v2h-1zM392 352h1v2h-1zM393 149h1v1h-1zM393 220h1v8h-1zM393 251h1v8h-1zM393 329h1v2h-1zM394 128h1v2h-1zM394 228h1v11h-1zM394 240h1v11h-1zM394 328h1v1h-1zM394 349h1v2h-1zM395 151h1v2h-1zM395 326h1v1h-1zM396 153h1v2h-1zM396 324h1v2h-1zM397 155h1v2h-1zM397 322h1v2h-1zM397 346h1v1h-1zM398 77h1v2h-1zM398 133h1v2h-1zM398 157h1v3h-1zM398 320h1v2h-1zM398 344h1v2h-1zM398 400h1v2h-1zM399 160h1v1h-1zM399 317h1v3h-1zM400 136h1v2h-1zM400 161h1v1h-1zM400 316h1v1h-1zM400 341h1v2h-1zM401 162h1v3h-1zM401 313h1v3h-1zM402 139h1v2h-1zM402 165h1v2h-1zM402 338h1v2h-1zM403 141h1v3h-1zM403 167h1v2h-1zM403 310h1v2h-1zM403 336h1v2h-1zM404 144h1v1h-1zM404 169h1v2h-1zM404 308h1v2h-1zM404 334h1v2h-1zM405 145h1v2h-1zM405 171h1v3h-1zM405 305h1v3h-1zM405 333h1v1h-1zM406 174h1v2h-1zM406 302h1v3h-1zM407 148h1v2h-1zM407 176h1v4h-1zM407 300h1v2h-1zM407 329h1v2h-1zM408 150h1v2h-1zM408 180h1v3h-1zM408 296h1v4h-1zM408 327h1v2h-1zM409 88h1v2h-1zM409 152h1v2h-1zM409 183h1v3h-1zM409 293h1v3h-1zM409 325h1v2h-1zM409 389h1v2h-1zM410 154h1v2h-1zM410 186h1v3h-1zM410 290h1v3h-1zM410 323h1v2h-1zM411 156h1v1h-1zM411 189h1v2h-1zM411 287h1v3h-1zM411 321h1v2h-1zM412 158h1v3h-1zM412 191h1v4h-1zM412 285h1v2h-1zM412 318h1v3h-1zM413 161h1v2h-1zM413 195h1v6h-1zM413 278h1v7h-1zM413 316h1v2h-1zM414 94h1v2h-1zM414 163h1v2h-1zM414 201h1v3h-1zM414 275h1v3h-1zM414 314h1v2h-1zM414 383h1v2h-1zM415 165h1v2h-1zM415 204h1v6h-1zM415 269h1v6h-1zM415 312h1v2h-1zM416 167h1v3h-1zM416 210h1v7h-1zM416 262h1v7h-1zM416 309h1v3h-1zM417 170h1v4h-1zM417 217h1v9h-1zM417 254h1v8h-1zM417 306h1v3h-1zM418 174h1v1h-1zM418 226h1v13h-1zM418 240h1v14h-1zM418 304h1v2h-1zM418 378h1v2h-1zM419 100h1v2h-1zM419 175h1v2h-1zM419 303h1v1h-1zM419 376h1v2h-1zM420 102h1v2h-1zM420 177h1v2h-1zM420 300h1v2h-1zM421 179h1v3h-1zM421 296h1v4h-1zM422 182h1v4h-1zM422 293h1v3h-1zM423 186h1v6h-1zM423 286h1v7h-1zM424 107h1v2h-1zM424 192h1v3h-1zM424 284h1v2h-1zM424 370h1v2h-1zM425 195h1v3h-1zM425 280h1v4h-1zM426 110h1v2h-1zM426 198h1v8h-1zM426 274h1v6h-1zM426 368h1v1h-1zM427 206h1v2h-1zM427 270h1v4h-1zM427 365h1v2h-1zM428 113h1v2h-1zM428 208h1v7h-1zM428 264h1v6h-1zM428 363h1v2h-1zM429 115h1v2h-1zM429 215h1v10h-1zM429 254h1v10h-1zM430 117h1v2h-1zM430 225h1v14h-1zM430 240h1v15h-1zM430 360h1v2h-1zM434 355h1v2h-1zM435 123h1v2h-1zM435 353h1v2h-1zM436 125h1v3h-1zM436 351h1v2h-1zM437 128h1v2h-1zM437 348h1v3h-1zM438 130h1v2h-1zM438 346h1v2h-1zM439 132h1v2h-1zM440 134h1v2h-1zM440 343h1v2h-1zM441 341h1v2h-1zM442 137h1v2h-1zM442 339h1v2h-1zM443 139h1v2h-1zM444 141h1v1h-1zM444 336h1v2h-1zM445 143h1v2h-1zM445 333h1v3h-1zM446 145h1v3h-1zM446 330h1v3h-1zM447 148h1v2h-1zM447 328h1v2h-1zM448 150h1v3h-1zM448 326h1v2h-1zM449 153h1v2h-1zM449 323h1v3h-1zM450 155h1v2h-1zM450 321h1v2h-1zM451 157h1v3h-1zM451 318h1v3h-1zM452 160h1v3h-1zM452 316h1v2h-1zM453 163h1v2h-1zM453 314h1v2h-1zM454 165h1v2h-1zM454 311h1v3h-1zM455 167h1v4h-1zM455 307h1v4h-1zM456 171h1v4h-1zM456 303h1v4h-1zM457 175h1v4h-1zM457 299h1v4h-1zM458 179h1v4h-1zM458 296h1v3h-1zM459 183h1v3h-1zM459 292h1v4h-1zM460 186h1v4h-1zM460 288h1v4h-1zM461 190h1v4h-1zM461 284h1v4h-1zM462 194h1v4h-1zM462 280h1v4h-1zM463 198h1v8h-1zM463 272h1v8h-1zM464 206h1v8h-1zM464 264h1v8h-1zM465 214h1v12h-1zM465 252h1v12h-1zM466 226h1v13h-1zM466 240h1v12h-1z"/></svg>
<div id="t">
<div class="l" style="top:6px"><span style="color:#fff">Astrolog 5.41G</span></div>
<div class="l" style="top:16px"><span style="color:#c0c0c0">Chart of the Moment</span></div>
<div class="l" style="top:26px"><span style="color:#fff">Sun February 15, 2026</span></div>
<div class="l" style="top:36px"><span style="color:#fff"> 8:48:00pm (ST -8:00 GMT)</span></div>
<div class="l" style="top:46px"><span style="color:#c0c0c0">San Francisco, CA</span></div>
<div class="l" style="top:56px"><span style="color:#c0c0c0">122°41'00"W 37°79'00"N</span></div>
<div class="l" style="top:66px"><span style="color:#c0c0c0">Placidus houses.</span></div>
<div class="l" style="top:76px"><span style="color:#c0c0c0">Tropical, Geocentric.</span></div>
<div class="l" style="top:86px"><span style="color:#fff">Julian Day = 2461087.7000</span></div>
<div class="l" style="top:96px"><span style="color:#c0c0c0">Obliquity = 23°26'09"</span></div>
<div class="l" style="top:106px"><span style="color:#c0c0c0">Sidereal time:  6:22:04</span></div>
<div class="l" style="top:116px"><span style="color:#c0c0c0">DeltaT =  95.3711</span></div>
<div class="l" style="top:136px"><span style="color:#f00"> 1st house: </span><span style="color:#0f0"> 4Lib29</span></div>
<div class="l" style="top:146px"><span style="color:#ff0"> 2nd house: </span><span style="color:#00f"> 1Sco16</span></div>
<div class="l" style="top:156px"><span style="color:#0f0"> 3rd house: </span><span style="color:#f00"> 1Sag52</span></div>
<div class="l" style="top:166px"><span style="color:#00f"> 4th house: </span><span style="color:#ff0"> 5Cap04</span></div>
<div class="l" style="top:176px"><span style="color:#f00"> 5th house: </span><span style="color:#0f0"> 8Aqu08</span></div>
<div class="l" style="top:186px"><span style="color:#ff0"> 6th house: </span><span style="color:#00f"> 8Pis22</span></div>
<div class="l" style="top:196px"><span style="color:#0f0"> 7th house: </span><span style="color:#f00"> 4Ari29</span></div>
<div class="l" style="top:206px"><span style="color:#00f"> 8th house: </span><span style="color:#ff0"> 1Tau16</span></div>
<div class="l" style="top:216px"><span style="color:#f00"> 9th house: </span><span style="color:#0f0"> 1Gem52</span></div>
<div class="l" style="top:226px"><span style="color:#ff0">10th house: </span><span style="color:#00f"> 5Can04</span></div>
<div class="l" style="top:236px"><span style="color:#0f0">11th house: </span><span style="color:#f00"> 8Leo08</span></div>
<div class="l" style="top:246px"><span style="color:#00f">12th house: </span><span style="color:#ff0"> 8Vir22</span></div>
<div class="l" style="top:266px"><span style="color:#ff0000"> Sun: </span><span style="color:#0f0">27Aqu31</span><span style="color:#fff"> </span><span style="color:#c0c0c0"> - 0°00'</span></div>
<div class="l" style="top:276px"><span style="color:#0000ff">Moon: </span><span style="color:#0f0">11Aqu55</span><span style="color:#fff"> </span><span style="color:#c0c0c0"> - 2°24'</span></div>
<div class="l" style="top:286px"><span style="color:#00ff00">Merc: </span><span style="color:#00f">14Pis58</span><span style="color:#fff"> </span><span style="color:#c0c0c0"> + 0°19'</span></div>
<div class="l" style="top:296px"><span style="color:#ffff00">Venu: </span><span style="color:#00f"> 7Pis14</span><span style="color:#fff"> </span><span style="color:#c0c0c0"> - 1°28'</span></div>
<div class="l" style="top:306px"><span style="color:#ff0000">Mars: </span><span style="color:#0f0">18Aqu40</span><span style="color:#fff"> </span><span style="color:#c0c0c0"> - 1°05'</span></div>
<div class="l" style="top:316px"><span style="color:#ff0000">Jupi: </span><span style="color:#00f">15Can56</span><span style="color:#fff">R</span><span style="color:#c0c0c0"> + 0°20'</span></div>
<div class="l" style="top:326px"><span style="color:#ffff00">Satu: </span><span style="color:#f00"> 0Ari15</span><span style="color:#fff"> </span><span style="color:#c0c0c0"> - 2°09'</span></div>
<div class="l" style="top:336px"><span style="color:#00ff00">Uran: </span><span style="color:#ff0">27Tau31</span><span style="color:#fff"> </span><span style="color:#c0c0c0"> - 0°11'</span></div>
<div class="l" style="top:346px"><span style="color:#0000ff">Nept: </span><span style="color:#f00"> 0Ari36</span><span style="color:#fff"> </span><span style="color:#c0c0c0"> - 1°19'</span></div>
<div class="l" style="top:356px"><span style="color:#0000ff">Plut: </span><span style="color:#0f0"> 4Aqu10</span><span style="color:#fff"> </span><span style="color:#c0c0c0"> - 3°50'</span></div>
<div class="l" style="top:376px"><span style="color:#c0c0c0">Fire: 2, Earth: 1,</span></div>
<div class="l" style="top:386px"><span style="color:#c0c0c0">Air : 4, Water: 3</span></div>
<div class="l" style="top:396px"><span style="color:#c0c0c0">Car: 3, Fix: 5, Mut: 2</span></div>
<div class="l" style="top:406px"><span style="color:#c0c0c0">Yang: 6, Yin: 4</span></div>
<div class="l" style="top:416px"><span style="color:#c0c0c0">M: 2, N: 8, A: 1, D: 9</span></div>
<div class="l" style="top:426px"><span style="color:#c0c0c0">Ang: 2, Suc: 5, Cad: 3</span></div>
<div class="l" style="top:436px"><span style="color:#c0c0c0">Learn: 4, Share: 6</span></div>
<div class="h" style="left:61px;top:271px;color:#ff0000">1</div>
<div class="h" style="left:100px;top:345px;color:#ffff00">2</div>
<div class="h" style="left:178px;top:394px;color:#00ff00">3</div>
<div class="h" style="left:273px;top:393px;color:#0000ff">4</div>
<div class="h" style="left:350px;top:343px;color:#ff0000">5</div>
<div class="h" style="left:387px;top:271px;color:#ffff00">6</div>
<div class="h" style="left:387px;top:195px;color:#00ff00">7</div>
<div class="h" style="left:348px;top:121px;color:#0000ff">8</div>
<div class="h" style="left:270px;top:72px;color:#ff0000">9</div>
<div class="h" style="left:175px;top:73px;color:#ffff00">10</div>
<div class="h" style="left:98px;top:123px;color:#00ff00">11</div>
<div class="h" style="left:61px;top:195px;color:#0000ff">12</div>
</div>
</body></html>
